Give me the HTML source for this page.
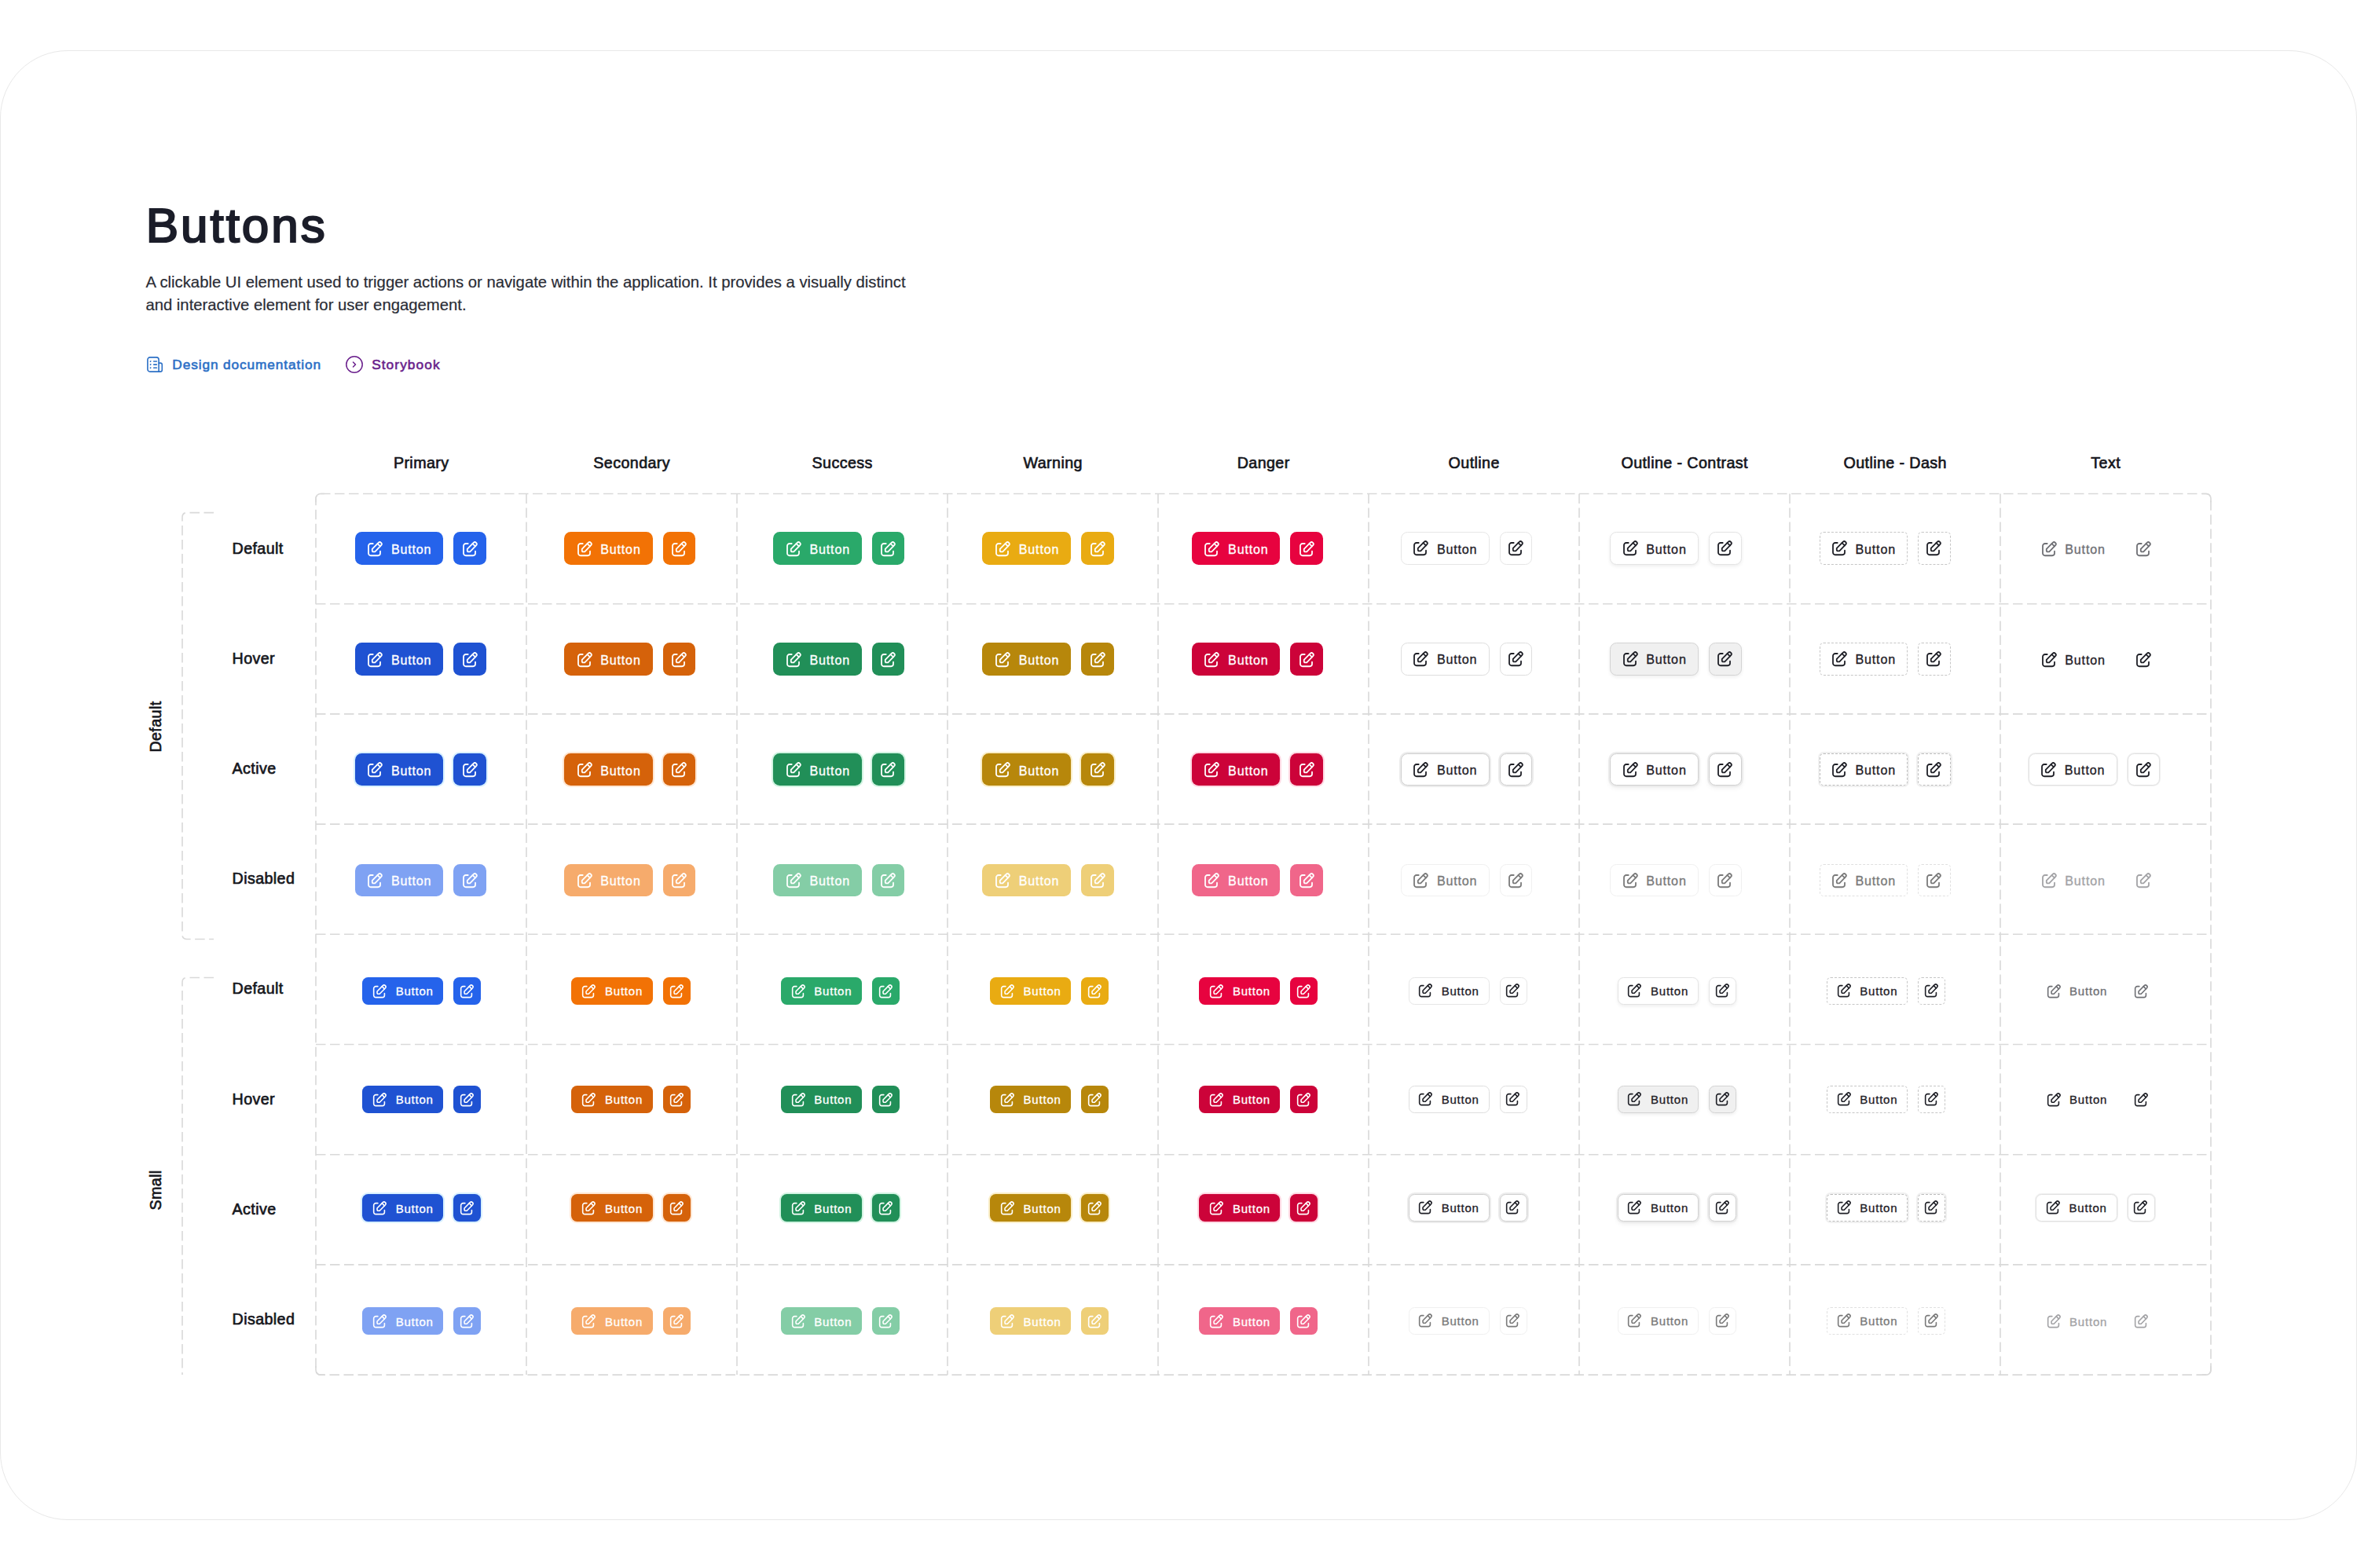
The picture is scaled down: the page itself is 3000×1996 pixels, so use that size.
<!DOCTYPE html><html><head><meta charset="utf-8"><title>Buttons</title><style>
*{box-sizing:border-box;margin:0;padding:0}
html,body{width:3000px;height:1996px;overflow:hidden;background:#ffffff;font-family:'Liberation Sans', sans-serif}
.a{position:absolute}
.t{position:absolute;white-space:nowrap;line-height:1}
.sb{font-weight:400;-webkit-text-stroke:0.6px currentColor}
.sh{font-weight:400;-webkit-text-stroke:0.65px currentColor}
.btn{position:absolute}
.btn svg{position:absolute;overflow:visible}
.btn span{position:absolute;white-space:nowrap;line-height:1;font-weight:400;-webkit-text-stroke:0.32px currentColor}
</style></head><body>
<div class="a" style="left:0;top:63.5px;width:3000px;height:1871px;border:1.5px solid #e8e8e8;border-radius:86px"></div>
<div class="t " style="left:185.74px;top:256.22px;font-size:62px;font-weight:400;color:#1b1d29;letter-spacing:2.95px;-webkit-text-stroke:2.2px #1b1d29">Buttons</div>
<div class="t " style="left:185.4px;top:348.82px;font-size:20.3px;font-weight:400;color:#2a2c35;-webkit-text-stroke:0.2px currentColor">A clickable UI element used to trigger actions or navigate within the application. It provides a visually distinct</div>
<div class="t " style="left:185.4px;top:378.32px;font-size:20.3px;font-weight:400;color:#2a2c35;-webkit-text-stroke:0.2px currentColor">and interactive element for user engagement.</div>
<svg class="a" style="left:185px;top:452px" width="24" height="24" viewBox="0 0 24 24" fill="none" stroke="#2c70c6" stroke-width="1.6" stroke-linecap="round" stroke-linejoin="round">
<path d="M17.1 21.1H5.9A3 3 0 0 1 2.9 18.1V5.9A3 3 0 0 1 5.9 2.9H14.1A3 3 0 0 1 17.1 5.9V21.1"/>
<path d="M17.1 10.1H19.1A2.2 2.2 0 0 1 21.3 12.3V18.9A2.2 2.2 0 0 1 19.1 21.1H17.1"/>
<path d="M6.4 8.2L6.8 7.8M6.4 12.3L6.8 11.9M6.4 16.4L6.8 16M10.7 8H14.4M10.7 12.1H14.4M10.7 16.2H14.4"/></svg>
<div class="t sb" style="left:219.32px;top:455.76px;font-size:17.3px;color:#2c70c6;letter-spacing:0.88px">Design documentation</div>
<svg class="a" style="left:439px;top:452px" width="24" height="24" viewBox="0 0 24 24" fill="none" stroke="#6a1f8c" stroke-width="1.5" stroke-linecap="round" stroke-linejoin="round">
<circle cx="12" cy="12" r="10.2"/><path d="M10.5 9l3 3-3 3"/></svg>
<div class="t sb" style="left:473.13px;top:455.76px;font-size:17.3px;color:#6a1f8c;letter-spacing:1.08px">Storybook</div>
<svg class="a" style="left:0;top:0" width="3000" height="1996" viewBox="0 0 3000 1996">
<rect x="402" y="628.5" width="2412" height="1121.6" rx="6" fill="none" stroke="#d9d9d9" stroke-width="1.6" stroke-dasharray="12.5 5.5"/>
<path d="M402 639.5 V634.5 A6 6 0 0 1 408 628.5 H413" fill="none" stroke="#d9d9d9" stroke-width="1.6"/>
<path d="M2814 639.5 V634.5 A6 6 0 0 0 2808 628.5 H2803" fill="none" stroke="#d9d9d9" stroke-width="1.6"/>
<path d="M402 1739.1 V1744.1 A6 6 0 0 0 408 1750.1 H413" fill="none" stroke="#d9d9d9" stroke-width="1.6"/>
<path d="M2814 1739.1 V1744.1 A6 6 0 0 1 2808 1750.1 H2803" fill="none" stroke="#d9d9d9" stroke-width="1.6"/>
<line x1="670" y1="628.5" x2="670" y2="1750.1" stroke="#d9d9d9" stroke-width="1.6" stroke-dasharray="12.5 5.5"/>
<line x1="938" y1="628.5" x2="938" y2="1750.1" stroke="#d9d9d9" stroke-width="1.6" stroke-dasharray="12.5 5.5"/>
<line x1="1206" y1="628.5" x2="1206" y2="1750.1" stroke="#d9d9d9" stroke-width="1.6" stroke-dasharray="12.5 5.5"/>
<line x1="1474" y1="628.5" x2="1474" y2="1750.1" stroke="#d9d9d9" stroke-width="1.6" stroke-dasharray="12.5 5.5"/>
<line x1="1742" y1="628.5" x2="1742" y2="1750.1" stroke="#d9d9d9" stroke-width="1.6" stroke-dasharray="12.5 5.5"/>
<line x1="2010" y1="628.5" x2="2010" y2="1750.1" stroke="#d9d9d9" stroke-width="1.6" stroke-dasharray="12.5 5.5"/>
<line x1="2278" y1="628.5" x2="2278" y2="1750.1" stroke="#d9d9d9" stroke-width="1.6" stroke-dasharray="12.5 5.5"/>
<line x1="2546" y1="628.5" x2="2546" y2="1750.1" stroke="#d9d9d9" stroke-width="1.6" stroke-dasharray="12.5 5.5"/>
<line x1="402" y1="768.7" x2="2814" y2="768.7" stroke="#d9d9d9" stroke-width="1.6" stroke-dasharray="12.5 5.5"/>
<line x1="402" y1="908.9" x2="2814" y2="908.9" stroke="#d9d9d9" stroke-width="1.6" stroke-dasharray="12.5 5.5"/>
<line x1="402" y1="1049.1" x2="2814" y2="1049.1" stroke="#d9d9d9" stroke-width="1.6" stroke-dasharray="12.5 5.5"/>
<line x1="402" y1="1189.3" x2="2814" y2="1189.3" stroke="#d9d9d9" stroke-width="1.6" stroke-dasharray="12.5 5.5"/>
<line x1="402" y1="1329.5" x2="2814" y2="1329.5" stroke="#d9d9d9" stroke-width="1.6" stroke-dasharray="12.5 5.5"/>
<line x1="402" y1="1469.7" x2="2814" y2="1469.7" stroke="#d9d9d9" stroke-width="1.6" stroke-dasharray="12.5 5.5"/>
<line x1="402" y1="1609.9" x2="2814" y2="1609.9" stroke="#d9d9d9" stroke-width="1.6" stroke-dasharray="12.5 5.5"/>
<path d="M272 652.6 H238 Q232 652.6 232 658.6 V1189.5 Q232 1195.5 238 1195.5 H272" fill="none" stroke="#d9d9d9" stroke-width="1.6" stroke-dasharray="12.5 5.5"/>
<clipPath id="cb"><rect x="200" y="1200" width="100" height="550"/></clipPath>
<g clip-path="url(#cb)"><path d="M272 1244.5 H238 Q232 1244.5 232 1250.5 V1780.5 Q232 1786.5 238 1786.5 H272" fill="none" stroke="#d9d9d9" stroke-width="1.6" stroke-dasharray="12.5 5.5"/></g>
</svg>
<div class="t sh" style="left:386.2px;width:300px;text-align:center;top:579.92px;font-size:19.7px;letter-spacing:0.4px;color:#15161c">Primary</div>
<div class="t sh" style="left:654.2px;width:300px;text-align:center;top:579.92px;font-size:19.7px;letter-spacing:0.4px;color:#15161c">Secondary</div>
<div class="t sh" style="left:922.2px;width:300px;text-align:center;top:579.92px;font-size:19.7px;letter-spacing:0.4px;color:#15161c">Success</div>
<div class="t sh" style="left:1190.2px;width:300px;text-align:center;top:579.92px;font-size:19.7px;letter-spacing:0.4px;color:#15161c">Warning</div>
<div class="t sh" style="left:1458.2px;width:300px;text-align:center;top:579.92px;font-size:19.7px;letter-spacing:0.4px;color:#15161c">Danger</div>
<div class="t sh" style="left:1726.2px;width:300px;text-align:center;top:579.92px;font-size:19.7px;letter-spacing:0.4px;color:#15161c">Outline</div>
<div class="t sh" style="left:1994.2px;width:300px;text-align:center;top:579.92px;font-size:19.7px;letter-spacing:0.4px;color:#15161c">Outline - Contrast</div>
<div class="t sh" style="left:2262.2px;width:300px;text-align:center;top:579.92px;font-size:19.7px;letter-spacing:0.4px;color:#15161c">Outline - Dash</div>
<div class="t sh" style="left:2530.2px;width:300px;text-align:center;top:579.92px;font-size:19.7px;letter-spacing:0.4px;color:#15161c">Text</div>
<div class="t sh" style="left:295.52px;top:688.52px;font-size:19.7px;color:#15161c;letter-spacing:0.4px">Default</div>
<div class="t sh" style="left:295.52px;top:828.72px;font-size:19.7px;color:#15161c;letter-spacing:0.4px">Hover</div>
<div class="t sh" style="left:295.52px;top:968.92px;font-size:19.7px;color:#15161c;letter-spacing:0.4px">Active</div>
<div class="t sh" style="left:295.52px;top:1109.12px;font-size:19.7px;color:#15161c;letter-spacing:0.4px">Disabled</div>
<div class="t sh" style="left:295.52px;top:1249.32px;font-size:19.7px;color:#15161c;letter-spacing:0.4px">Default</div>
<div class="t sh" style="left:295.52px;top:1389.52px;font-size:19.7px;color:#15161c;letter-spacing:0.4px">Hover</div>
<div class="t sh" style="left:295.52px;top:1529.72px;font-size:19.7px;color:#15161c;letter-spacing:0.4px">Active</div>
<div class="t sh" style="left:295.52px;top:1669.92px;font-size:19.7px;color:#15161c;letter-spacing:0.4px">Disabled</div>
<div class="t sh" style="left:199px;top:924.5px;font-size:19.7px;letter-spacing:0.4px;color:#15161c;transform:translate(-50%,-50%) rotate(-90deg);transform-origin:50% 50%">Default</div>
<div class="t sh" style="left:199px;top:1515px;font-size:19.7px;letter-spacing:0.4px;color:#15161c;transform:translate(-50%,-50%) rotate(-90deg);transform-origin:50% 50%">Small</div>
<div class="btn" style="left:451.5px;top:677.4px;width:112.8px;height:41.8px;border-radius:8.5px;background:#2563eb;"><svg style="left:13.8px;top:10.53px" width="24" height="24" viewBox="0 0 24 24" fill="none" stroke="#ffffff" stroke-width="1.8" stroke-linecap="round" stroke-linejoin="round"><path d="M9.7 4H6.9A2.9 2.9 0 0 0 4 6.9V16.35A2.9 2.9 0 0 0 6.9 19.25H16.1A2.9 2.9 0 0 0 19 16.35V13.7"/><path d="M8.77 13.1V10.94L16.66 2.81A2.45 2.45 0 0 1 20.16 6.23L12.23 14.4H10.07A1.3 1.3 0 0 1 8.77 13.1Z"/><path d="M15.47 4.03L18.97 7.45"/></svg><span style="left:46.41px;top:13.87px;font-size:16.1px;letter-spacing:0.82px;color:#ffffff">Button</span></div>
<div class="btn" style="left:577.2px;top:677.4px;width:41.6px;height:41.6px;border-radius:8.5px;background:#2563eb;"><svg style="left:8.6px;top:10.53px" width="24" height="24" viewBox="0 0 24 24" fill="none" stroke="#ffffff" stroke-width="1.8" stroke-linecap="round" stroke-linejoin="round"><path d="M9.7 4H6.9A2.9 2.9 0 0 0 4 6.9V16.35A2.9 2.9 0 0 0 6.9 19.25H16.1A2.9 2.9 0 0 0 19 16.35V13.7"/><path d="M8.77 13.1V10.94L16.66 2.81A2.45 2.45 0 0 1 20.16 6.23L12.23 14.4H10.07A1.3 1.3 0 0 1 8.77 13.1Z"/><path d="M15.47 4.03L18.97 7.45"/></svg></div>
<div class="btn" style="left:717.8px;top:677.4px;width:112.8px;height:41.8px;border-radius:8.5px;background:#f27205;"><svg style="left:13.8px;top:10.53px" width="24" height="24" viewBox="0 0 24 24" fill="none" stroke="#ffffff" stroke-width="1.8" stroke-linecap="round" stroke-linejoin="round"><path d="M9.7 4H6.9A2.9 2.9 0 0 0 4 6.9V16.35A2.9 2.9 0 0 0 6.9 19.25H16.1A2.9 2.9 0 0 0 19 16.35V13.7"/><path d="M8.77 13.1V10.94L16.66 2.81A2.45 2.45 0 0 1 20.16 6.23L12.23 14.4H10.07A1.3 1.3 0 0 1 8.77 13.1Z"/><path d="M15.47 4.03L18.97 7.45"/></svg><span style="left:46.41px;top:13.87px;font-size:16.1px;letter-spacing:0.82px;color:#ffffff">Button</span></div>
<div class="btn" style="left:843.5px;top:677.4px;width:41.6px;height:41.6px;border-radius:8.5px;background:#f27205;"><svg style="left:8.6px;top:10.53px" width="24" height="24" viewBox="0 0 24 24" fill="none" stroke="#ffffff" stroke-width="1.8" stroke-linecap="round" stroke-linejoin="round"><path d="M9.7 4H6.9A2.9 2.9 0 0 0 4 6.9V16.35A2.9 2.9 0 0 0 6.9 19.25H16.1A2.9 2.9 0 0 0 19 16.35V13.7"/><path d="M8.77 13.1V10.94L16.66 2.81A2.45 2.45 0 0 1 20.16 6.23L12.23 14.4H10.07A1.3 1.3 0 0 1 8.77 13.1Z"/><path d="M15.47 4.03L18.97 7.45"/></svg></div>
<div class="btn" style="left:984.1px;top:677.4px;width:112.8px;height:41.8px;border-radius:8.5px;background:#2aa96a;"><svg style="left:13.8px;top:10.53px" width="24" height="24" viewBox="0 0 24 24" fill="none" stroke="#ffffff" stroke-width="1.8" stroke-linecap="round" stroke-linejoin="round"><path d="M9.7 4H6.9A2.9 2.9 0 0 0 4 6.9V16.35A2.9 2.9 0 0 0 6.9 19.25H16.1A2.9 2.9 0 0 0 19 16.35V13.7"/><path d="M8.77 13.1V10.94L16.66 2.81A2.45 2.45 0 0 1 20.16 6.23L12.23 14.4H10.07A1.3 1.3 0 0 1 8.77 13.1Z"/><path d="M15.47 4.03L18.97 7.45"/></svg><span style="left:46.41px;top:13.87px;font-size:16.1px;letter-spacing:0.82px;color:#ffffff">Button</span></div>
<div class="btn" style="left:1109.8px;top:677.4px;width:41.6px;height:41.6px;border-radius:8.5px;background:#2aa96a;"><svg style="left:8.6px;top:10.53px" width="24" height="24" viewBox="0 0 24 24" fill="none" stroke="#ffffff" stroke-width="1.8" stroke-linecap="round" stroke-linejoin="round"><path d="M9.7 4H6.9A2.9 2.9 0 0 0 4 6.9V16.35A2.9 2.9 0 0 0 6.9 19.25H16.1A2.9 2.9 0 0 0 19 16.35V13.7"/><path d="M8.77 13.1V10.94L16.66 2.81A2.45 2.45 0 0 1 20.16 6.23L12.23 14.4H10.07A1.3 1.3 0 0 1 8.77 13.1Z"/><path d="M15.47 4.03L18.97 7.45"/></svg></div>
<div class="btn" style="left:1250.4px;top:677.4px;width:112.8px;height:41.8px;border-radius:8.5px;background:#e9ab12;"><svg style="left:13.8px;top:10.53px" width="24" height="24" viewBox="0 0 24 24" fill="none" stroke="#ffffff" stroke-width="1.8" stroke-linecap="round" stroke-linejoin="round"><path d="M9.7 4H6.9A2.9 2.9 0 0 0 4 6.9V16.35A2.9 2.9 0 0 0 6.9 19.25H16.1A2.9 2.9 0 0 0 19 16.35V13.7"/><path d="M8.77 13.1V10.94L16.66 2.81A2.45 2.45 0 0 1 20.16 6.23L12.23 14.4H10.07A1.3 1.3 0 0 1 8.77 13.1Z"/><path d="M15.47 4.03L18.97 7.45"/></svg><span style="left:46.41px;top:13.87px;font-size:16.1px;letter-spacing:0.82px;color:#ffffff">Button</span></div>
<div class="btn" style="left:1376.1px;top:677.4px;width:41.6px;height:41.6px;border-radius:8.5px;background:#e9ab12;"><svg style="left:8.6px;top:10.53px" width="24" height="24" viewBox="0 0 24 24" fill="none" stroke="#ffffff" stroke-width="1.8" stroke-linecap="round" stroke-linejoin="round"><path d="M9.7 4H6.9A2.9 2.9 0 0 0 4 6.9V16.35A2.9 2.9 0 0 0 6.9 19.25H16.1A2.9 2.9 0 0 0 19 16.35V13.7"/><path d="M8.77 13.1V10.94L16.66 2.81A2.45 2.45 0 0 1 20.16 6.23L12.23 14.4H10.07A1.3 1.3 0 0 1 8.77 13.1Z"/><path d="M15.47 4.03L18.97 7.45"/></svg></div>
<div class="btn" style="left:1516.7px;top:677.4px;width:112.8px;height:41.8px;border-radius:8.5px;background:#e7033f;"><svg style="left:13.8px;top:10.53px" width="24" height="24" viewBox="0 0 24 24" fill="none" stroke="#ffffff" stroke-width="1.8" stroke-linecap="round" stroke-linejoin="round"><path d="M9.7 4H6.9A2.9 2.9 0 0 0 4 6.9V16.35A2.9 2.9 0 0 0 6.9 19.25H16.1A2.9 2.9 0 0 0 19 16.35V13.7"/><path d="M8.77 13.1V10.94L16.66 2.81A2.45 2.45 0 0 1 20.16 6.23L12.23 14.4H10.07A1.3 1.3 0 0 1 8.77 13.1Z"/><path d="M15.47 4.03L18.97 7.45"/></svg><span style="left:46.41px;top:13.87px;font-size:16.1px;letter-spacing:0.82px;color:#ffffff">Button</span></div>
<div class="btn" style="left:1642.4px;top:677.4px;width:41.6px;height:41.6px;border-radius:8.5px;background:#e7033f;"><svg style="left:8.6px;top:10.53px" width="24" height="24" viewBox="0 0 24 24" fill="none" stroke="#ffffff" stroke-width="1.8" stroke-linecap="round" stroke-linejoin="round"><path d="M9.7 4H6.9A2.9 2.9 0 0 0 4 6.9V16.35A2.9 2.9 0 0 0 6.9 19.25H16.1A2.9 2.9 0 0 0 19 16.35V13.7"/><path d="M8.77 13.1V10.94L16.66 2.81A2.45 2.45 0 0 1 20.16 6.23L12.23 14.4H10.07A1.3 1.3 0 0 1 8.77 13.1Z"/><path d="M15.47 4.03L18.97 7.45"/></svg></div>
<div class="btn" style="left:1783px;top:677.4px;width:112.8px;height:41.8px;border-radius:8.5px;background:#fff;border:1.5px solid #e6e6e6;"><svg style="left:12.3px;top:9.03px" width="24" height="24" viewBox="0 0 24 24" fill="none" stroke="#1f2027" stroke-width="1.8" stroke-linecap="round" stroke-linejoin="round"><path d="M9.7 4H6.9A2.9 2.9 0 0 0 4 6.9V16.35A2.9 2.9 0 0 0 6.9 19.25H16.1A2.9 2.9 0 0 0 19 16.35V13.7"/><path d="M8.77 13.1V10.94L16.66 2.81A2.45 2.45 0 0 1 20.16 6.23L12.23 14.4H10.07A1.3 1.3 0 0 1 8.77 13.1Z"/><path d="M15.47 4.03L18.97 7.45"/></svg><span style="left:44.91px;top:12.37px;font-size:16.1px;letter-spacing:0.82px;color:#1f2027">Button</span></div>
<div class="btn" style="left:1908.7px;top:677.4px;width:41.6px;height:41.6px;border-radius:8.5px;background:#fff;border:1.5px solid #e6e6e6;"><svg style="left:7.1px;top:9.03px" width="24" height="24" viewBox="0 0 24 24" fill="none" stroke="#1f2027" stroke-width="1.8" stroke-linecap="round" stroke-linejoin="round"><path d="M9.7 4H6.9A2.9 2.9 0 0 0 4 6.9V16.35A2.9 2.9 0 0 0 6.9 19.25H16.1A2.9 2.9 0 0 0 19 16.35V13.7"/><path d="M8.77 13.1V10.94L16.66 2.81A2.45 2.45 0 0 1 20.16 6.23L12.23 14.4H10.07A1.3 1.3 0 0 1 8.77 13.1Z"/><path d="M15.47 4.03L18.97 7.45"/></svg></div>
<div class="btn" style="left:2049.3px;top:677.4px;width:112.8px;height:41.8px;border-radius:8.5px;background:#fff;border:1.5px solid #e4e4e4;box-shadow:0 2px 4px rgba(0,0,0,0.07);"><svg style="left:12.3px;top:9.03px" width="24" height="24" viewBox="0 0 24 24" fill="none" stroke="#1f2027" stroke-width="1.8" stroke-linecap="round" stroke-linejoin="round"><path d="M9.7 4H6.9A2.9 2.9 0 0 0 4 6.9V16.35A2.9 2.9 0 0 0 6.9 19.25H16.1A2.9 2.9 0 0 0 19 16.35V13.7"/><path d="M8.77 13.1V10.94L16.66 2.81A2.45 2.45 0 0 1 20.16 6.23L12.23 14.4H10.07A1.3 1.3 0 0 1 8.77 13.1Z"/><path d="M15.47 4.03L18.97 7.45"/></svg><span style="left:44.91px;top:12.37px;font-size:16.1px;letter-spacing:0.82px;color:#1f2027">Button</span></div>
<div class="btn" style="left:2175px;top:677.4px;width:41.6px;height:41.6px;border-radius:8.5px;background:#fff;border:1.5px solid #e4e4e4;box-shadow:0 2px 4px rgba(0,0,0,0.07);"><svg style="left:7.1px;top:9.03px" width="24" height="24" viewBox="0 0 24 24" fill="none" stroke="#1f2027" stroke-width="1.8" stroke-linecap="round" stroke-linejoin="round"><path d="M9.7 4H6.9A2.9 2.9 0 0 0 4 6.9V16.35A2.9 2.9 0 0 0 6.9 19.25H16.1A2.9 2.9 0 0 0 19 16.35V13.7"/><path d="M8.77 13.1V10.94L16.66 2.81A2.45 2.45 0 0 1 20.16 6.23L12.23 14.4H10.07A1.3 1.3 0 0 1 8.77 13.1Z"/><path d="M15.47 4.03L18.97 7.45"/></svg></div>
<div class="btn" style="left:2315.6px;top:677.4px;width:112.8px;height:41.8px;border-radius:8.5px;background:#fff;border:1.5px dashed #c6c6c6;border-radius:5px;"><svg style="left:12.3px;top:9.03px" width="24" height="24" viewBox="0 0 24 24" fill="none" stroke="#1f2027" stroke-width="1.8" stroke-linecap="round" stroke-linejoin="round"><path d="M9.7 4H6.9A2.9 2.9 0 0 0 4 6.9V16.35A2.9 2.9 0 0 0 6.9 19.25H16.1A2.9 2.9 0 0 0 19 16.35V13.7"/><path d="M8.77 13.1V10.94L16.66 2.81A2.45 2.45 0 0 1 20.16 6.23L12.23 14.4H10.07A1.3 1.3 0 0 1 8.77 13.1Z"/><path d="M15.47 4.03L18.97 7.45"/></svg><span style="left:44.91px;top:12.37px;font-size:16.1px;letter-spacing:0.82px;color:#1f2027">Button</span></div>
<div class="btn" style="left:2441.3px;top:677.4px;width:41.6px;height:41.6px;border-radius:8.5px;background:#fff;border:1.5px dashed #c6c6c6;border-radius:5px;"><svg style="left:7.1px;top:9.03px" width="24" height="24" viewBox="0 0 24 24" fill="none" stroke="#1f2027" stroke-width="1.8" stroke-linecap="round" stroke-linejoin="round"><path d="M9.7 4H6.9A2.9 2.9 0 0 0 4 6.9V16.35A2.9 2.9 0 0 0 6.9 19.25H16.1A2.9 2.9 0 0 0 19 16.35V13.7"/><path d="M8.77 13.1V10.94L16.66 2.81A2.45 2.45 0 0 1 20.16 6.23L12.23 14.4H10.07A1.3 1.3 0 0 1 8.77 13.1Z"/><path d="M15.47 4.03L18.97 7.45"/></svg></div>
<div class="btn" style="left:2581.9px;top:677.4px;width:112.8px;height:41.8px;border-radius:8.5px;background:transparent;"><svg style="left:13.8px;top:10.53px" width="24" height="24" viewBox="0 0 24 24" fill="none" stroke="#6f7075" stroke-width="1.8" stroke-linecap="round" stroke-linejoin="round"><path d="M9.7 4H6.9A2.9 2.9 0 0 0 4 6.9V16.35A2.9 2.9 0 0 0 6.9 19.25H16.1A2.9 2.9 0 0 0 19 16.35V13.7"/><path d="M8.77 13.1V10.94L16.66 2.81A2.45 2.45 0 0 1 20.16 6.23L12.23 14.4H10.07A1.3 1.3 0 0 1 8.77 13.1Z"/><path d="M15.47 4.03L18.97 7.45"/></svg><span style="left:46.41px;top:13.87px;font-size:16.1px;letter-spacing:0.82px;color:#6f7075">Button</span></div>
<div class="btn" style="left:2707.6px;top:677.4px;width:41.6px;height:41.6px;border-radius:8.5px;background:transparent;"><svg style="left:8.6px;top:10.53px" width="24" height="24" viewBox="0 0 24 24" fill="none" stroke="#6f7075" stroke-width="1.8" stroke-linecap="round" stroke-linejoin="round"><path d="M9.7 4H6.9A2.9 2.9 0 0 0 4 6.9V16.35A2.9 2.9 0 0 0 6.9 19.25H16.1A2.9 2.9 0 0 0 19 16.35V13.7"/><path d="M8.77 13.1V10.94L16.66 2.81A2.45 2.45 0 0 1 20.16 6.23L12.23 14.4H10.07A1.3 1.3 0 0 1 8.77 13.1Z"/><path d="M15.47 4.03L18.97 7.45"/></svg></div>
<div class="btn" style="left:451.5px;top:818px;width:112.8px;height:41.8px;border-radius:8.5px;background:#1f52d2;"><svg style="left:13.8px;top:10.53px" width="24" height="24" viewBox="0 0 24 24" fill="none" stroke="#ffffff" stroke-width="1.8" stroke-linecap="round" stroke-linejoin="round"><path d="M9.7 4H6.9A2.9 2.9 0 0 0 4 6.9V16.35A2.9 2.9 0 0 0 6.9 19.25H16.1A2.9 2.9 0 0 0 19 16.35V13.7"/><path d="M8.77 13.1V10.94L16.66 2.81A2.45 2.45 0 0 1 20.16 6.23L12.23 14.4H10.07A1.3 1.3 0 0 1 8.77 13.1Z"/><path d="M15.47 4.03L18.97 7.45"/></svg><span style="left:46.41px;top:13.87px;font-size:16.1px;letter-spacing:0.82px;color:#ffffff">Button</span></div>
<div class="btn" style="left:577.2px;top:818px;width:41.6px;height:41.6px;border-radius:8.5px;background:#1f52d2;"><svg style="left:8.6px;top:10.53px" width="24" height="24" viewBox="0 0 24 24" fill="none" stroke="#ffffff" stroke-width="1.8" stroke-linecap="round" stroke-linejoin="round"><path d="M9.7 4H6.9A2.9 2.9 0 0 0 4 6.9V16.35A2.9 2.9 0 0 0 6.9 19.25H16.1A2.9 2.9 0 0 0 19 16.35V13.7"/><path d="M8.77 13.1V10.94L16.66 2.81A2.45 2.45 0 0 1 20.16 6.23L12.23 14.4H10.07A1.3 1.3 0 0 1 8.77 13.1Z"/><path d="M15.47 4.03L18.97 7.45"/></svg></div>
<div class="btn" style="left:717.8px;top:818px;width:112.8px;height:41.8px;border-radius:8.5px;background:#d5620a;"><svg style="left:13.8px;top:10.53px" width="24" height="24" viewBox="0 0 24 24" fill="none" stroke="#ffffff" stroke-width="1.8" stroke-linecap="round" stroke-linejoin="round"><path d="M9.7 4H6.9A2.9 2.9 0 0 0 4 6.9V16.35A2.9 2.9 0 0 0 6.9 19.25H16.1A2.9 2.9 0 0 0 19 16.35V13.7"/><path d="M8.77 13.1V10.94L16.66 2.81A2.45 2.45 0 0 1 20.16 6.23L12.23 14.4H10.07A1.3 1.3 0 0 1 8.77 13.1Z"/><path d="M15.47 4.03L18.97 7.45"/></svg><span style="left:46.41px;top:13.87px;font-size:16.1px;letter-spacing:0.82px;color:#ffffff">Button</span></div>
<div class="btn" style="left:843.5px;top:818px;width:41.6px;height:41.6px;border-radius:8.5px;background:#d5620a;"><svg style="left:8.6px;top:10.53px" width="24" height="24" viewBox="0 0 24 24" fill="none" stroke="#ffffff" stroke-width="1.8" stroke-linecap="round" stroke-linejoin="round"><path d="M9.7 4H6.9A2.9 2.9 0 0 0 4 6.9V16.35A2.9 2.9 0 0 0 6.9 19.25H16.1A2.9 2.9 0 0 0 19 16.35V13.7"/><path d="M8.77 13.1V10.94L16.66 2.81A2.45 2.45 0 0 1 20.16 6.23L12.23 14.4H10.07A1.3 1.3 0 0 1 8.77 13.1Z"/><path d="M15.47 4.03L18.97 7.45"/></svg></div>
<div class="btn" style="left:984.1px;top:818px;width:112.8px;height:41.8px;border-radius:8.5px;background:#218f58;"><svg style="left:13.8px;top:10.53px" width="24" height="24" viewBox="0 0 24 24" fill="none" stroke="#ffffff" stroke-width="1.8" stroke-linecap="round" stroke-linejoin="round"><path d="M9.7 4H6.9A2.9 2.9 0 0 0 4 6.9V16.35A2.9 2.9 0 0 0 6.9 19.25H16.1A2.9 2.9 0 0 0 19 16.35V13.7"/><path d="M8.77 13.1V10.94L16.66 2.81A2.45 2.45 0 0 1 20.16 6.23L12.23 14.4H10.07A1.3 1.3 0 0 1 8.77 13.1Z"/><path d="M15.47 4.03L18.97 7.45"/></svg><span style="left:46.41px;top:13.87px;font-size:16.1px;letter-spacing:0.82px;color:#ffffff">Button</span></div>
<div class="btn" style="left:1109.8px;top:818px;width:41.6px;height:41.6px;border-radius:8.5px;background:#218f58;"><svg style="left:8.6px;top:10.53px" width="24" height="24" viewBox="0 0 24 24" fill="none" stroke="#ffffff" stroke-width="1.8" stroke-linecap="round" stroke-linejoin="round"><path d="M9.7 4H6.9A2.9 2.9 0 0 0 4 6.9V16.35A2.9 2.9 0 0 0 6.9 19.25H16.1A2.9 2.9 0 0 0 19 16.35V13.7"/><path d="M8.77 13.1V10.94L16.66 2.81A2.45 2.45 0 0 1 20.16 6.23L12.23 14.4H10.07A1.3 1.3 0 0 1 8.77 13.1Z"/><path d="M15.47 4.03L18.97 7.45"/></svg></div>
<div class="btn" style="left:1250.4px;top:818px;width:112.8px;height:41.8px;border-radius:8.5px;background:#b7870b;"><svg style="left:13.8px;top:10.53px" width="24" height="24" viewBox="0 0 24 24" fill="none" stroke="#ffffff" stroke-width="1.8" stroke-linecap="round" stroke-linejoin="round"><path d="M9.7 4H6.9A2.9 2.9 0 0 0 4 6.9V16.35A2.9 2.9 0 0 0 6.9 19.25H16.1A2.9 2.9 0 0 0 19 16.35V13.7"/><path d="M8.77 13.1V10.94L16.66 2.81A2.45 2.45 0 0 1 20.16 6.23L12.23 14.4H10.07A1.3 1.3 0 0 1 8.77 13.1Z"/><path d="M15.47 4.03L18.97 7.45"/></svg><span style="left:46.41px;top:13.87px;font-size:16.1px;letter-spacing:0.82px;color:#ffffff">Button</span></div>
<div class="btn" style="left:1376.1px;top:818px;width:41.6px;height:41.6px;border-radius:8.5px;background:#b7870b;"><svg style="left:8.6px;top:10.53px" width="24" height="24" viewBox="0 0 24 24" fill="none" stroke="#ffffff" stroke-width="1.8" stroke-linecap="round" stroke-linejoin="round"><path d="M9.7 4H6.9A2.9 2.9 0 0 0 4 6.9V16.35A2.9 2.9 0 0 0 6.9 19.25H16.1A2.9 2.9 0 0 0 19 16.35V13.7"/><path d="M8.77 13.1V10.94L16.66 2.81A2.45 2.45 0 0 1 20.16 6.23L12.23 14.4H10.07A1.3 1.3 0 0 1 8.77 13.1Z"/><path d="M15.47 4.03L18.97 7.45"/></svg></div>
<div class="btn" style="left:1516.7px;top:818px;width:112.8px;height:41.8px;border-radius:8.5px;background:#cc0339;"><svg style="left:13.8px;top:10.53px" width="24" height="24" viewBox="0 0 24 24" fill="none" stroke="#ffffff" stroke-width="1.8" stroke-linecap="round" stroke-linejoin="round"><path d="M9.7 4H6.9A2.9 2.9 0 0 0 4 6.9V16.35A2.9 2.9 0 0 0 6.9 19.25H16.1A2.9 2.9 0 0 0 19 16.35V13.7"/><path d="M8.77 13.1V10.94L16.66 2.81A2.45 2.45 0 0 1 20.16 6.23L12.23 14.4H10.07A1.3 1.3 0 0 1 8.77 13.1Z"/><path d="M15.47 4.03L18.97 7.45"/></svg><span style="left:46.41px;top:13.87px;font-size:16.1px;letter-spacing:0.82px;color:#ffffff">Button</span></div>
<div class="btn" style="left:1642.4px;top:818px;width:41.6px;height:41.6px;border-radius:8.5px;background:#cc0339;"><svg style="left:8.6px;top:10.53px" width="24" height="24" viewBox="0 0 24 24" fill="none" stroke="#ffffff" stroke-width="1.8" stroke-linecap="round" stroke-linejoin="round"><path d="M9.7 4H6.9A2.9 2.9 0 0 0 4 6.9V16.35A2.9 2.9 0 0 0 6.9 19.25H16.1A2.9 2.9 0 0 0 19 16.35V13.7"/><path d="M8.77 13.1V10.94L16.66 2.81A2.45 2.45 0 0 1 20.16 6.23L12.23 14.4H10.07A1.3 1.3 0 0 1 8.77 13.1Z"/><path d="M15.47 4.03L18.97 7.45"/></svg></div>
<div class="btn" style="left:1783px;top:818px;width:112.8px;height:41.8px;border-radius:8.5px;background:#fff;border:1.5px solid #dedede;"><svg style="left:12.3px;top:9.03px" width="24" height="24" viewBox="0 0 24 24" fill="none" stroke="#1f2027" stroke-width="1.8" stroke-linecap="round" stroke-linejoin="round"><path d="M9.7 4H6.9A2.9 2.9 0 0 0 4 6.9V16.35A2.9 2.9 0 0 0 6.9 19.25H16.1A2.9 2.9 0 0 0 19 16.35V13.7"/><path d="M8.77 13.1V10.94L16.66 2.81A2.45 2.45 0 0 1 20.16 6.23L12.23 14.4H10.07A1.3 1.3 0 0 1 8.77 13.1Z"/><path d="M15.47 4.03L18.97 7.45"/></svg><span style="left:44.91px;top:12.37px;font-size:16.1px;letter-spacing:0.82px;color:#1f2027">Button</span></div>
<div class="btn" style="left:1908.7px;top:818px;width:41.6px;height:41.6px;border-radius:8.5px;background:#fff;border:1.5px solid #dedede;"><svg style="left:7.1px;top:9.03px" width="24" height="24" viewBox="0 0 24 24" fill="none" stroke="#1f2027" stroke-width="1.8" stroke-linecap="round" stroke-linejoin="round"><path d="M9.7 4H6.9A2.9 2.9 0 0 0 4 6.9V16.35A2.9 2.9 0 0 0 6.9 19.25H16.1A2.9 2.9 0 0 0 19 16.35V13.7"/><path d="M8.77 13.1V10.94L16.66 2.81A2.45 2.45 0 0 1 20.16 6.23L12.23 14.4H10.07A1.3 1.3 0 0 1 8.77 13.1Z"/><path d="M15.47 4.03L18.97 7.45"/></svg></div>
<div class="btn" style="left:2049.3px;top:818px;width:112.8px;height:41.8px;border-radius:8.5px;background:#f0f0f0;border:1.5px solid #d4d4d4;box-shadow:0 2px 4px rgba(0,0,0,0.07);"><svg style="left:12.3px;top:9.03px" width="24" height="24" viewBox="0 0 24 24" fill="none" stroke="#1f2027" stroke-width="1.8" stroke-linecap="round" stroke-linejoin="round"><path d="M9.7 4H6.9A2.9 2.9 0 0 0 4 6.9V16.35A2.9 2.9 0 0 0 6.9 19.25H16.1A2.9 2.9 0 0 0 19 16.35V13.7"/><path d="M8.77 13.1V10.94L16.66 2.81A2.45 2.45 0 0 1 20.16 6.23L12.23 14.4H10.07A1.3 1.3 0 0 1 8.77 13.1Z"/><path d="M15.47 4.03L18.97 7.45"/></svg><span style="left:44.91px;top:12.37px;font-size:16.1px;letter-spacing:0.82px;color:#1f2027">Button</span></div>
<div class="btn" style="left:2175px;top:818px;width:41.6px;height:41.6px;border-radius:8.5px;background:#f0f0f0;border:1.5px solid #d4d4d4;box-shadow:0 2px 4px rgba(0,0,0,0.07);"><svg style="left:7.1px;top:9.03px" width="24" height="24" viewBox="0 0 24 24" fill="none" stroke="#1f2027" stroke-width="1.8" stroke-linecap="round" stroke-linejoin="round"><path d="M9.7 4H6.9A2.9 2.9 0 0 0 4 6.9V16.35A2.9 2.9 0 0 0 6.9 19.25H16.1A2.9 2.9 0 0 0 19 16.35V13.7"/><path d="M8.77 13.1V10.94L16.66 2.81A2.45 2.45 0 0 1 20.16 6.23L12.23 14.4H10.07A1.3 1.3 0 0 1 8.77 13.1Z"/><path d="M15.47 4.03L18.97 7.45"/></svg></div>
<div class="btn" style="left:2315.6px;top:818px;width:112.8px;height:41.8px;border-radius:8.5px;background:#fff;border:1.5px dashed #c6c6c6;border-radius:5px;"><svg style="left:12.3px;top:9.03px" width="24" height="24" viewBox="0 0 24 24" fill="none" stroke="#1f2027" stroke-width="1.8" stroke-linecap="round" stroke-linejoin="round"><path d="M9.7 4H6.9A2.9 2.9 0 0 0 4 6.9V16.35A2.9 2.9 0 0 0 6.9 19.25H16.1A2.9 2.9 0 0 0 19 16.35V13.7"/><path d="M8.77 13.1V10.94L16.66 2.81A2.45 2.45 0 0 1 20.16 6.23L12.23 14.4H10.07A1.3 1.3 0 0 1 8.77 13.1Z"/><path d="M15.47 4.03L18.97 7.45"/></svg><span style="left:44.91px;top:12.37px;font-size:16.1px;letter-spacing:0.82px;color:#1f2027">Button</span></div>
<div class="btn" style="left:2441.3px;top:818px;width:41.6px;height:41.6px;border-radius:8.5px;background:#fff;border:1.5px dashed #c6c6c6;border-radius:5px;"><svg style="left:7.1px;top:9.03px" width="24" height="24" viewBox="0 0 24 24" fill="none" stroke="#1f2027" stroke-width="1.8" stroke-linecap="round" stroke-linejoin="round"><path d="M9.7 4H6.9A2.9 2.9 0 0 0 4 6.9V16.35A2.9 2.9 0 0 0 6.9 19.25H16.1A2.9 2.9 0 0 0 19 16.35V13.7"/><path d="M8.77 13.1V10.94L16.66 2.81A2.45 2.45 0 0 1 20.16 6.23L12.23 14.4H10.07A1.3 1.3 0 0 1 8.77 13.1Z"/><path d="M15.47 4.03L18.97 7.45"/></svg></div>
<div class="btn" style="left:2581.9px;top:818px;width:112.8px;height:41.8px;border-radius:8.5px;background:transparent;"><svg style="left:13.8px;top:10.53px" width="24" height="24" viewBox="0 0 24 24" fill="none" stroke="#1f2027" stroke-width="1.8" stroke-linecap="round" stroke-linejoin="round"><path d="M9.7 4H6.9A2.9 2.9 0 0 0 4 6.9V16.35A2.9 2.9 0 0 0 6.9 19.25H16.1A2.9 2.9 0 0 0 19 16.35V13.7"/><path d="M8.77 13.1V10.94L16.66 2.81A2.45 2.45 0 0 1 20.16 6.23L12.23 14.4H10.07A1.3 1.3 0 0 1 8.77 13.1Z"/><path d="M15.47 4.03L18.97 7.45"/></svg><span style="left:46.41px;top:13.87px;font-size:16.1px;letter-spacing:0.82px;color:#1f2027">Button</span></div>
<div class="btn" style="left:2707.6px;top:818px;width:41.6px;height:41.6px;border-radius:8.5px;background:transparent;"><svg style="left:8.6px;top:10.53px" width="24" height="24" viewBox="0 0 24 24" fill="none" stroke="#1f2027" stroke-width="1.8" stroke-linecap="round" stroke-linejoin="round"><path d="M9.7 4H6.9A2.9 2.9 0 0 0 4 6.9V16.35A2.9 2.9 0 0 0 6.9 19.25H16.1A2.9 2.9 0 0 0 19 16.35V13.7"/><path d="M8.77 13.1V10.94L16.66 2.81A2.45 2.45 0 0 1 20.16 6.23L12.23 14.4H10.07A1.3 1.3 0 0 1 8.77 13.1Z"/><path d="M15.47 4.03L18.97 7.45"/></svg></div>
<div class="btn" style="left:451.5px;top:958.7px;width:112.8px;height:41.8px;border-radius:8.5px;background:#1f52d2;box-shadow:0 0 0 2px #d8f0ff;"><svg style="left:13.8px;top:10.53px" width="24" height="24" viewBox="0 0 24 24" fill="none" stroke="#ffffff" stroke-width="1.8" stroke-linecap="round" stroke-linejoin="round"><path d="M9.7 4H6.9A2.9 2.9 0 0 0 4 6.9V16.35A2.9 2.9 0 0 0 6.9 19.25H16.1A2.9 2.9 0 0 0 19 16.35V13.7"/><path d="M8.77 13.1V10.94L16.66 2.81A2.45 2.45 0 0 1 20.16 6.23L12.23 14.4H10.07A1.3 1.3 0 0 1 8.77 13.1Z"/><path d="M15.47 4.03L18.97 7.45"/></svg><span style="left:46.41px;top:13.87px;font-size:16.1px;letter-spacing:0.82px;color:#ffffff">Button</span></div>
<div class="btn" style="left:577.2px;top:958.7px;width:41.6px;height:41.6px;border-radius:8.5px;background:#1f52d2;box-shadow:0 0 0 2px #d8f0ff;"><svg style="left:8.6px;top:10.53px" width="24" height="24" viewBox="0 0 24 24" fill="none" stroke="#ffffff" stroke-width="1.8" stroke-linecap="round" stroke-linejoin="round"><path d="M9.7 4H6.9A2.9 2.9 0 0 0 4 6.9V16.35A2.9 2.9 0 0 0 6.9 19.25H16.1A2.9 2.9 0 0 0 19 16.35V13.7"/><path d="M8.77 13.1V10.94L16.66 2.81A2.45 2.45 0 0 1 20.16 6.23L12.23 14.4H10.07A1.3 1.3 0 0 1 8.77 13.1Z"/><path d="M15.47 4.03L18.97 7.45"/></svg></div>
<div class="btn" style="left:717.8px;top:958.7px;width:112.8px;height:41.8px;border-radius:8.5px;background:#d5620a;box-shadow:0 0 0 2px #ffe6d2;"><svg style="left:13.8px;top:10.53px" width="24" height="24" viewBox="0 0 24 24" fill="none" stroke="#ffffff" stroke-width="1.8" stroke-linecap="round" stroke-linejoin="round"><path d="M9.7 4H6.9A2.9 2.9 0 0 0 4 6.9V16.35A2.9 2.9 0 0 0 6.9 19.25H16.1A2.9 2.9 0 0 0 19 16.35V13.7"/><path d="M8.77 13.1V10.94L16.66 2.81A2.45 2.45 0 0 1 20.16 6.23L12.23 14.4H10.07A1.3 1.3 0 0 1 8.77 13.1Z"/><path d="M15.47 4.03L18.97 7.45"/></svg><span style="left:46.41px;top:13.87px;font-size:16.1px;letter-spacing:0.82px;color:#ffffff">Button</span></div>
<div class="btn" style="left:843.5px;top:958.7px;width:41.6px;height:41.6px;border-radius:8.5px;background:#d5620a;box-shadow:0 0 0 2px #ffe6d2;"><svg style="left:8.6px;top:10.53px" width="24" height="24" viewBox="0 0 24 24" fill="none" stroke="#ffffff" stroke-width="1.8" stroke-linecap="round" stroke-linejoin="round"><path d="M9.7 4H6.9A2.9 2.9 0 0 0 4 6.9V16.35A2.9 2.9 0 0 0 6.9 19.25H16.1A2.9 2.9 0 0 0 19 16.35V13.7"/><path d="M8.77 13.1V10.94L16.66 2.81A2.45 2.45 0 0 1 20.16 6.23L12.23 14.4H10.07A1.3 1.3 0 0 1 8.77 13.1Z"/><path d="M15.47 4.03L18.97 7.45"/></svg></div>
<div class="btn" style="left:984.1px;top:958.7px;width:112.8px;height:41.8px;border-radius:8.5px;background:#218f58;box-shadow:0 0 0 2px #d2f4e2;"><svg style="left:13.8px;top:10.53px" width="24" height="24" viewBox="0 0 24 24" fill="none" stroke="#ffffff" stroke-width="1.8" stroke-linecap="round" stroke-linejoin="round"><path d="M9.7 4H6.9A2.9 2.9 0 0 0 4 6.9V16.35A2.9 2.9 0 0 0 6.9 19.25H16.1A2.9 2.9 0 0 0 19 16.35V13.7"/><path d="M8.77 13.1V10.94L16.66 2.81A2.45 2.45 0 0 1 20.16 6.23L12.23 14.4H10.07A1.3 1.3 0 0 1 8.77 13.1Z"/><path d="M15.47 4.03L18.97 7.45"/></svg><span style="left:46.41px;top:13.87px;font-size:16.1px;letter-spacing:0.82px;color:#ffffff">Button</span></div>
<div class="btn" style="left:1109.8px;top:958.7px;width:41.6px;height:41.6px;border-radius:8.5px;background:#218f58;box-shadow:0 0 0 2px #d2f4e2;"><svg style="left:8.6px;top:10.53px" width="24" height="24" viewBox="0 0 24 24" fill="none" stroke="#ffffff" stroke-width="1.8" stroke-linecap="round" stroke-linejoin="round"><path d="M9.7 4H6.9A2.9 2.9 0 0 0 4 6.9V16.35A2.9 2.9 0 0 0 6.9 19.25H16.1A2.9 2.9 0 0 0 19 16.35V13.7"/><path d="M8.77 13.1V10.94L16.66 2.81A2.45 2.45 0 0 1 20.16 6.23L12.23 14.4H10.07A1.3 1.3 0 0 1 8.77 13.1Z"/><path d="M15.47 4.03L18.97 7.45"/></svg></div>
<div class="btn" style="left:1250.4px;top:958.7px;width:112.8px;height:41.8px;border-radius:8.5px;background:#b7870b;box-shadow:0 0 0 2px #faeec8;"><svg style="left:13.8px;top:10.53px" width="24" height="24" viewBox="0 0 24 24" fill="none" stroke="#ffffff" stroke-width="1.8" stroke-linecap="round" stroke-linejoin="round"><path d="M9.7 4H6.9A2.9 2.9 0 0 0 4 6.9V16.35A2.9 2.9 0 0 0 6.9 19.25H16.1A2.9 2.9 0 0 0 19 16.35V13.7"/><path d="M8.77 13.1V10.94L16.66 2.81A2.45 2.45 0 0 1 20.16 6.23L12.23 14.4H10.07A1.3 1.3 0 0 1 8.77 13.1Z"/><path d="M15.47 4.03L18.97 7.45"/></svg><span style="left:46.41px;top:13.87px;font-size:16.1px;letter-spacing:0.82px;color:#ffffff">Button</span></div>
<div class="btn" style="left:1376.1px;top:958.7px;width:41.6px;height:41.6px;border-radius:8.5px;background:#b7870b;box-shadow:0 0 0 2px #faeec8;"><svg style="left:8.6px;top:10.53px" width="24" height="24" viewBox="0 0 24 24" fill="none" stroke="#ffffff" stroke-width="1.8" stroke-linecap="round" stroke-linejoin="round"><path d="M9.7 4H6.9A2.9 2.9 0 0 0 4 6.9V16.35A2.9 2.9 0 0 0 6.9 19.25H16.1A2.9 2.9 0 0 0 19 16.35V13.7"/><path d="M8.77 13.1V10.94L16.66 2.81A2.45 2.45 0 0 1 20.16 6.23L12.23 14.4H10.07A1.3 1.3 0 0 1 8.77 13.1Z"/><path d="M15.47 4.03L18.97 7.45"/></svg></div>
<div class="btn" style="left:1516.7px;top:958.7px;width:112.8px;height:41.8px;border-radius:8.5px;background:#cc0339;box-shadow:0 0 0 2px #ffd9e3;"><svg style="left:13.8px;top:10.53px" width="24" height="24" viewBox="0 0 24 24" fill="none" stroke="#ffffff" stroke-width="1.8" stroke-linecap="round" stroke-linejoin="round"><path d="M9.7 4H6.9A2.9 2.9 0 0 0 4 6.9V16.35A2.9 2.9 0 0 0 6.9 19.25H16.1A2.9 2.9 0 0 0 19 16.35V13.7"/><path d="M8.77 13.1V10.94L16.66 2.81A2.45 2.45 0 0 1 20.16 6.23L12.23 14.4H10.07A1.3 1.3 0 0 1 8.77 13.1Z"/><path d="M15.47 4.03L18.97 7.45"/></svg><span style="left:46.41px;top:13.87px;font-size:16.1px;letter-spacing:0.82px;color:#ffffff">Button</span></div>
<div class="btn" style="left:1642.4px;top:958.7px;width:41.6px;height:41.6px;border-radius:8.5px;background:#cc0339;box-shadow:0 0 0 2px #ffd9e3;"><svg style="left:8.6px;top:10.53px" width="24" height="24" viewBox="0 0 24 24" fill="none" stroke="#ffffff" stroke-width="1.8" stroke-linecap="round" stroke-linejoin="round"><path d="M9.7 4H6.9A2.9 2.9 0 0 0 4 6.9V16.35A2.9 2.9 0 0 0 6.9 19.25H16.1A2.9 2.9 0 0 0 19 16.35V13.7"/><path d="M8.77 13.1V10.94L16.66 2.81A2.45 2.45 0 0 1 20.16 6.23L12.23 14.4H10.07A1.3 1.3 0 0 1 8.77 13.1Z"/><path d="M15.47 4.03L18.97 7.45"/></svg></div>
<div class="btn" style="left:1783px;top:958.7px;width:112.8px;height:41.8px;border-radius:8.5px;background:#fff;border:1.5px solid #cfcfcf;box-shadow:0 0 0 2px #ececec;"><svg style="left:12.3px;top:9.03px" width="24" height="24" viewBox="0 0 24 24" fill="none" stroke="#1f2027" stroke-width="1.8" stroke-linecap="round" stroke-linejoin="round"><path d="M9.7 4H6.9A2.9 2.9 0 0 0 4 6.9V16.35A2.9 2.9 0 0 0 6.9 19.25H16.1A2.9 2.9 0 0 0 19 16.35V13.7"/><path d="M8.77 13.1V10.94L16.66 2.81A2.45 2.45 0 0 1 20.16 6.23L12.23 14.4H10.07A1.3 1.3 0 0 1 8.77 13.1Z"/><path d="M15.47 4.03L18.97 7.45"/></svg><span style="left:44.91px;top:12.37px;font-size:16.1px;letter-spacing:0.82px;color:#1f2027">Button</span></div>
<div class="btn" style="left:1908.7px;top:958.7px;width:41.6px;height:41.6px;border-radius:8.5px;background:#fff;border:1.5px solid #cfcfcf;box-shadow:0 0 0 2px #ececec;"><svg style="left:7.1px;top:9.03px" width="24" height="24" viewBox="0 0 24 24" fill="none" stroke="#1f2027" stroke-width="1.8" stroke-linecap="round" stroke-linejoin="round"><path d="M9.7 4H6.9A2.9 2.9 0 0 0 4 6.9V16.35A2.9 2.9 0 0 0 6.9 19.25H16.1A2.9 2.9 0 0 0 19 16.35V13.7"/><path d="M8.77 13.1V10.94L16.66 2.81A2.45 2.45 0 0 1 20.16 6.23L12.23 14.4H10.07A1.3 1.3 0 0 1 8.77 13.1Z"/><path d="M15.47 4.03L18.97 7.45"/></svg></div>
<div class="btn" style="left:2049.3px;top:958.7px;width:112.8px;height:41.8px;border-radius:8.5px;background:#fff;border:1.5px solid #cfcfcf;box-shadow:0 0 0 2px #ececec,0 3px 6px rgba(0,0,0,0.08);"><svg style="left:12.3px;top:9.03px" width="24" height="24" viewBox="0 0 24 24" fill="none" stroke="#1f2027" stroke-width="1.8" stroke-linecap="round" stroke-linejoin="round"><path d="M9.7 4H6.9A2.9 2.9 0 0 0 4 6.9V16.35A2.9 2.9 0 0 0 6.9 19.25H16.1A2.9 2.9 0 0 0 19 16.35V13.7"/><path d="M8.77 13.1V10.94L16.66 2.81A2.45 2.45 0 0 1 20.16 6.23L12.23 14.4H10.07A1.3 1.3 0 0 1 8.77 13.1Z"/><path d="M15.47 4.03L18.97 7.45"/></svg><span style="left:44.91px;top:12.37px;font-size:16.1px;letter-spacing:0.82px;color:#1f2027">Button</span></div>
<div class="btn" style="left:2175px;top:958.7px;width:41.6px;height:41.6px;border-radius:8.5px;background:#fff;border:1.5px solid #cfcfcf;box-shadow:0 0 0 2px #ececec,0 3px 6px rgba(0,0,0,0.08);"><svg style="left:7.1px;top:9.03px" width="24" height="24" viewBox="0 0 24 24" fill="none" stroke="#1f2027" stroke-width="1.8" stroke-linecap="round" stroke-linejoin="round"><path d="M9.7 4H6.9A2.9 2.9 0 0 0 4 6.9V16.35A2.9 2.9 0 0 0 6.9 19.25H16.1A2.9 2.9 0 0 0 19 16.35V13.7"/><path d="M8.77 13.1V10.94L16.66 2.81A2.45 2.45 0 0 1 20.16 6.23L12.23 14.4H10.07A1.3 1.3 0 0 1 8.77 13.1Z"/><path d="M15.47 4.03L18.97 7.45"/></svg></div>
<div class="btn" style="left:2315.6px;top:958.7px;width:112.8px;height:41.8px;border-radius:8.5px;background:#fff;border:1.5px dashed #bcbcbc;border-radius:5px;box-shadow:0 0 0 2px #f0f0f0;"><svg style="left:12.3px;top:9.03px" width="24" height="24" viewBox="0 0 24 24" fill="none" stroke="#1f2027" stroke-width="1.8" stroke-linecap="round" stroke-linejoin="round"><path d="M9.7 4H6.9A2.9 2.9 0 0 0 4 6.9V16.35A2.9 2.9 0 0 0 6.9 19.25H16.1A2.9 2.9 0 0 0 19 16.35V13.7"/><path d="M8.77 13.1V10.94L16.66 2.81A2.45 2.45 0 0 1 20.16 6.23L12.23 14.4H10.07A1.3 1.3 0 0 1 8.77 13.1Z"/><path d="M15.47 4.03L18.97 7.45"/></svg><span style="left:44.91px;top:12.37px;font-size:16.1px;letter-spacing:0.82px;color:#1f2027">Button</span></div>
<div class="btn" style="left:2441.3px;top:958.7px;width:41.6px;height:41.6px;border-radius:8.5px;background:#fff;border:1.5px dashed #bcbcbc;border-radius:5px;box-shadow:0 0 0 2px #f0f0f0;"><svg style="left:7.1px;top:9.03px" width="24" height="24" viewBox="0 0 24 24" fill="none" stroke="#1f2027" stroke-width="1.8" stroke-linecap="round" stroke-linejoin="round"><path d="M9.7 4H6.9A2.9 2.9 0 0 0 4 6.9V16.35A2.9 2.9 0 0 0 6.9 19.25H16.1A2.9 2.9 0 0 0 19 16.35V13.7"/><path d="M8.77 13.1V10.94L16.66 2.81A2.45 2.45 0 0 1 20.16 6.23L12.23 14.4H10.07A1.3 1.3 0 0 1 8.77 13.1Z"/><path d="M15.47 4.03L18.97 7.45"/></svg></div>
<div class="btn" style="left:2581.9px;top:958.7px;width:112.8px;height:41.8px;border-radius:8.5px;background:#fff;border:1.5px solid #e2e2e2;box-shadow:0 0 0 1px #f0f0f0;"><svg style="left:12.3px;top:9.03px" width="24" height="24" viewBox="0 0 24 24" fill="none" stroke="#1f2027" stroke-width="1.8" stroke-linecap="round" stroke-linejoin="round"><path d="M9.7 4H6.9A2.9 2.9 0 0 0 4 6.9V16.35A2.9 2.9 0 0 0 6.9 19.25H16.1A2.9 2.9 0 0 0 19 16.35V13.7"/><path d="M8.77 13.1V10.94L16.66 2.81A2.45 2.45 0 0 1 20.16 6.23L12.23 14.4H10.07A1.3 1.3 0 0 1 8.77 13.1Z"/><path d="M15.47 4.03L18.97 7.45"/></svg><span style="left:44.91px;top:12.37px;font-size:16.1px;letter-spacing:0.82px;color:#1f2027">Button</span></div>
<div class="btn" style="left:2707.6px;top:958.7px;width:41.6px;height:41.6px;border-radius:8.5px;background:#fff;border:1.5px solid #e2e2e2;box-shadow:0 0 0 1px #f0f0f0;"><svg style="left:7.1px;top:9.03px" width="24" height="24" viewBox="0 0 24 24" fill="none" stroke="#1f2027" stroke-width="1.8" stroke-linecap="round" stroke-linejoin="round"><path d="M9.7 4H6.9A2.9 2.9 0 0 0 4 6.9V16.35A2.9 2.9 0 0 0 6.9 19.25H16.1A2.9 2.9 0 0 0 19 16.35V13.7"/><path d="M8.77 13.1V10.94L16.66 2.81A2.45 2.45 0 0 1 20.16 6.23L12.23 14.4H10.07A1.3 1.3 0 0 1 8.77 13.1Z"/><path d="M15.47 4.03L18.97 7.45"/></svg></div>
<div class="btn" style="left:451.5px;top:1099.6px;width:112.8px;height:41.8px;border-radius:8.5px;background:#7fa2f3;"><svg style="left:13.8px;top:10.53px" width="24" height="24" viewBox="0 0 24 24" fill="none" stroke="#ffffff" stroke-width="1.8" stroke-linecap="round" stroke-linejoin="round"><path d="M9.7 4H6.9A2.9 2.9 0 0 0 4 6.9V16.35A2.9 2.9 0 0 0 6.9 19.25H16.1A2.9 2.9 0 0 0 19 16.35V13.7"/><path d="M8.77 13.1V10.94L16.66 2.81A2.45 2.45 0 0 1 20.16 6.23L12.23 14.4H10.07A1.3 1.3 0 0 1 8.77 13.1Z"/><path d="M15.47 4.03L18.97 7.45"/></svg><span style="left:46.41px;top:13.87px;font-size:16.1px;letter-spacing:0.82px;color:#ffffff">Button</span></div>
<div class="btn" style="left:577.2px;top:1099.6px;width:41.6px;height:41.6px;border-radius:8.5px;background:#7fa2f3;"><svg style="left:8.6px;top:10.53px" width="24" height="24" viewBox="0 0 24 24" fill="none" stroke="#ffffff" stroke-width="1.8" stroke-linecap="round" stroke-linejoin="round"><path d="M9.7 4H6.9A2.9 2.9 0 0 0 4 6.9V16.35A2.9 2.9 0 0 0 6.9 19.25H16.1A2.9 2.9 0 0 0 19 16.35V13.7"/><path d="M8.77 13.1V10.94L16.66 2.81A2.45 2.45 0 0 1 20.16 6.23L12.23 14.4H10.07A1.3 1.3 0 0 1 8.77 13.1Z"/><path d="M15.47 4.03L18.97 7.45"/></svg></div>
<div class="btn" style="left:717.8px;top:1099.6px;width:112.8px;height:41.8px;border-radius:8.5px;background:#f6ab6c;"><svg style="left:13.8px;top:10.53px" width="24" height="24" viewBox="0 0 24 24" fill="none" stroke="#ffffff" stroke-width="1.8" stroke-linecap="round" stroke-linejoin="round"><path d="M9.7 4H6.9A2.9 2.9 0 0 0 4 6.9V16.35A2.9 2.9 0 0 0 6.9 19.25H16.1A2.9 2.9 0 0 0 19 16.35V13.7"/><path d="M8.77 13.1V10.94L16.66 2.81A2.45 2.45 0 0 1 20.16 6.23L12.23 14.4H10.07A1.3 1.3 0 0 1 8.77 13.1Z"/><path d="M15.47 4.03L18.97 7.45"/></svg><span style="left:46.41px;top:13.87px;font-size:16.1px;letter-spacing:0.82px;color:#ffffff">Button</span></div>
<div class="btn" style="left:843.5px;top:1099.6px;width:41.6px;height:41.6px;border-radius:8.5px;background:#f6ab6c;"><svg style="left:8.6px;top:10.53px" width="24" height="24" viewBox="0 0 24 24" fill="none" stroke="#ffffff" stroke-width="1.8" stroke-linecap="round" stroke-linejoin="round"><path d="M9.7 4H6.9A2.9 2.9 0 0 0 4 6.9V16.35A2.9 2.9 0 0 0 6.9 19.25H16.1A2.9 2.9 0 0 0 19 16.35V13.7"/><path d="M8.77 13.1V10.94L16.66 2.81A2.45 2.45 0 0 1 20.16 6.23L12.23 14.4H10.07A1.3 1.3 0 0 1 8.77 13.1Z"/><path d="M15.47 4.03L18.97 7.45"/></svg></div>
<div class="btn" style="left:984.1px;top:1099.6px;width:112.8px;height:41.8px;border-radius:8.5px;background:#84cda6;"><svg style="left:13.8px;top:10.53px" width="24" height="24" viewBox="0 0 24 24" fill="none" stroke="#ffffff" stroke-width="1.8" stroke-linecap="round" stroke-linejoin="round"><path d="M9.7 4H6.9A2.9 2.9 0 0 0 4 6.9V16.35A2.9 2.9 0 0 0 6.9 19.25H16.1A2.9 2.9 0 0 0 19 16.35V13.7"/><path d="M8.77 13.1V10.94L16.66 2.81A2.45 2.45 0 0 1 20.16 6.23L12.23 14.4H10.07A1.3 1.3 0 0 1 8.77 13.1Z"/><path d="M15.47 4.03L18.97 7.45"/></svg><span style="left:46.41px;top:13.87px;font-size:16.1px;letter-spacing:0.82px;color:#ffffff">Button</span></div>
<div class="btn" style="left:1109.8px;top:1099.6px;width:41.6px;height:41.6px;border-radius:8.5px;background:#84cda6;"><svg style="left:8.6px;top:10.53px" width="24" height="24" viewBox="0 0 24 24" fill="none" stroke="#ffffff" stroke-width="1.8" stroke-linecap="round" stroke-linejoin="round"><path d="M9.7 4H6.9A2.9 2.9 0 0 0 4 6.9V16.35A2.9 2.9 0 0 0 6.9 19.25H16.1A2.9 2.9 0 0 0 19 16.35V13.7"/><path d="M8.77 13.1V10.94L16.66 2.81A2.45 2.45 0 0 1 20.16 6.23L12.23 14.4H10.07A1.3 1.3 0 0 1 8.77 13.1Z"/><path d="M15.47 4.03L18.97 7.45"/></svg></div>
<div class="btn" style="left:1250.4px;top:1099.6px;width:112.8px;height:41.8px;border-radius:8.5px;background:#eecf78;"><svg style="left:13.8px;top:10.53px" width="24" height="24" viewBox="0 0 24 24" fill="none" stroke="#ffffff" stroke-width="1.8" stroke-linecap="round" stroke-linejoin="round"><path d="M9.7 4H6.9A2.9 2.9 0 0 0 4 6.9V16.35A2.9 2.9 0 0 0 6.9 19.25H16.1A2.9 2.9 0 0 0 19 16.35V13.7"/><path d="M8.77 13.1V10.94L16.66 2.81A2.45 2.45 0 0 1 20.16 6.23L12.23 14.4H10.07A1.3 1.3 0 0 1 8.77 13.1Z"/><path d="M15.47 4.03L18.97 7.45"/></svg><span style="left:46.41px;top:13.87px;font-size:16.1px;letter-spacing:0.82px;color:#ffffff">Button</span></div>
<div class="btn" style="left:1376.1px;top:1099.6px;width:41.6px;height:41.6px;border-radius:8.5px;background:#eecf78;"><svg style="left:8.6px;top:10.53px" width="24" height="24" viewBox="0 0 24 24" fill="none" stroke="#ffffff" stroke-width="1.8" stroke-linecap="round" stroke-linejoin="round"><path d="M9.7 4H6.9A2.9 2.9 0 0 0 4 6.9V16.35A2.9 2.9 0 0 0 6.9 19.25H16.1A2.9 2.9 0 0 0 19 16.35V13.7"/><path d="M8.77 13.1V10.94L16.66 2.81A2.45 2.45 0 0 1 20.16 6.23L12.23 14.4H10.07A1.3 1.3 0 0 1 8.77 13.1Z"/><path d="M15.47 4.03L18.97 7.45"/></svg></div>
<div class="btn" style="left:1516.7px;top:1099.6px;width:112.8px;height:41.8px;border-radius:8.5px;background:#f0668a;"><svg style="left:13.8px;top:10.53px" width="24" height="24" viewBox="0 0 24 24" fill="none" stroke="#ffffff" stroke-width="1.8" stroke-linecap="round" stroke-linejoin="round"><path d="M9.7 4H6.9A2.9 2.9 0 0 0 4 6.9V16.35A2.9 2.9 0 0 0 6.9 19.25H16.1A2.9 2.9 0 0 0 19 16.35V13.7"/><path d="M8.77 13.1V10.94L16.66 2.81A2.45 2.45 0 0 1 20.16 6.23L12.23 14.4H10.07A1.3 1.3 0 0 1 8.77 13.1Z"/><path d="M15.47 4.03L18.97 7.45"/></svg><span style="left:46.41px;top:13.87px;font-size:16.1px;letter-spacing:0.82px;color:#ffffff">Button</span></div>
<div class="btn" style="left:1642.4px;top:1099.6px;width:41.6px;height:41.6px;border-radius:8.5px;background:#f0668a;"><svg style="left:8.6px;top:10.53px" width="24" height="24" viewBox="0 0 24 24" fill="none" stroke="#ffffff" stroke-width="1.8" stroke-linecap="round" stroke-linejoin="round"><path d="M9.7 4H6.9A2.9 2.9 0 0 0 4 6.9V16.35A2.9 2.9 0 0 0 6.9 19.25H16.1A2.9 2.9 0 0 0 19 16.35V13.7"/><path d="M8.77 13.1V10.94L16.66 2.81A2.45 2.45 0 0 1 20.16 6.23L12.23 14.4H10.07A1.3 1.3 0 0 1 8.77 13.1Z"/><path d="M15.47 4.03L18.97 7.45"/></svg></div>
<div class="btn" style="left:1783px;top:1099.6px;width:112.8px;height:41.8px;border-radius:8.5px;background:#fff;border:1.5px solid #f0f0f0;"><svg style="left:12.3px;top:9.03px" width="24" height="24" viewBox="0 0 24 24" fill="none" stroke="#7a7a7a" stroke-width="1.8" stroke-linecap="round" stroke-linejoin="round"><path d="M9.7 4H6.9A2.9 2.9 0 0 0 4 6.9V16.35A2.9 2.9 0 0 0 6.9 19.25H16.1A2.9 2.9 0 0 0 19 16.35V13.7"/><path d="M8.77 13.1V10.94L16.66 2.81A2.45 2.45 0 0 1 20.16 6.23L12.23 14.4H10.07A1.3 1.3 0 0 1 8.77 13.1Z"/><path d="M15.47 4.03L18.97 7.45"/></svg><span style="left:44.91px;top:12.37px;font-size:16.1px;letter-spacing:0.82px;color:#7a7a7a">Button</span></div>
<div class="btn" style="left:1908.7px;top:1099.6px;width:41.6px;height:41.6px;border-radius:8.5px;background:#fff;border:1.5px solid #f0f0f0;"><svg style="left:7.1px;top:9.03px" width="24" height="24" viewBox="0 0 24 24" fill="none" stroke="#7a7a7a" stroke-width="1.8" stroke-linecap="round" stroke-linejoin="round"><path d="M9.7 4H6.9A2.9 2.9 0 0 0 4 6.9V16.35A2.9 2.9 0 0 0 6.9 19.25H16.1A2.9 2.9 0 0 0 19 16.35V13.7"/><path d="M8.77 13.1V10.94L16.66 2.81A2.45 2.45 0 0 1 20.16 6.23L12.23 14.4H10.07A1.3 1.3 0 0 1 8.77 13.1Z"/><path d="M15.47 4.03L18.97 7.45"/></svg></div>
<div class="btn" style="left:2049.3px;top:1099.6px;width:112.8px;height:41.8px;border-radius:8.5px;background:#fff;border:1.5px solid #f0f0f0;"><svg style="left:12.3px;top:9.03px" width="24" height="24" viewBox="0 0 24 24" fill="none" stroke="#7a7a7a" stroke-width="1.8" stroke-linecap="round" stroke-linejoin="round"><path d="M9.7 4H6.9A2.9 2.9 0 0 0 4 6.9V16.35A2.9 2.9 0 0 0 6.9 19.25H16.1A2.9 2.9 0 0 0 19 16.35V13.7"/><path d="M8.77 13.1V10.94L16.66 2.81A2.45 2.45 0 0 1 20.16 6.23L12.23 14.4H10.07A1.3 1.3 0 0 1 8.77 13.1Z"/><path d="M15.47 4.03L18.97 7.45"/></svg><span style="left:44.91px;top:12.37px;font-size:16.1px;letter-spacing:0.82px;color:#7a7a7a">Button</span></div>
<div class="btn" style="left:2175px;top:1099.6px;width:41.6px;height:41.6px;border-radius:8.5px;background:#fff;border:1.5px solid #f0f0f0;"><svg style="left:7.1px;top:9.03px" width="24" height="24" viewBox="0 0 24 24" fill="none" stroke="#7a7a7a" stroke-width="1.8" stroke-linecap="round" stroke-linejoin="round"><path d="M9.7 4H6.9A2.9 2.9 0 0 0 4 6.9V16.35A2.9 2.9 0 0 0 6.9 19.25H16.1A2.9 2.9 0 0 0 19 16.35V13.7"/><path d="M8.77 13.1V10.94L16.66 2.81A2.45 2.45 0 0 1 20.16 6.23L12.23 14.4H10.07A1.3 1.3 0 0 1 8.77 13.1Z"/><path d="M15.47 4.03L18.97 7.45"/></svg></div>
<div class="btn" style="left:2315.6px;top:1099.6px;width:112.8px;height:41.8px;border-radius:8.5px;background:#fff;border:1.5px dashed #e0e0e0;border-radius:5px;"><svg style="left:12.3px;top:9.03px" width="24" height="24" viewBox="0 0 24 24" fill="none" stroke="#7a7a7a" stroke-width="1.8" stroke-linecap="round" stroke-linejoin="round"><path d="M9.7 4H6.9A2.9 2.9 0 0 0 4 6.9V16.35A2.9 2.9 0 0 0 6.9 19.25H16.1A2.9 2.9 0 0 0 19 16.35V13.7"/><path d="M8.77 13.1V10.94L16.66 2.81A2.45 2.45 0 0 1 20.16 6.23L12.23 14.4H10.07A1.3 1.3 0 0 1 8.77 13.1Z"/><path d="M15.47 4.03L18.97 7.45"/></svg><span style="left:44.91px;top:12.37px;font-size:16.1px;letter-spacing:0.82px;color:#7a7a7a">Button</span></div>
<div class="btn" style="left:2441.3px;top:1099.6px;width:41.6px;height:41.6px;border-radius:8.5px;background:#fff;border:1.5px dashed #e0e0e0;border-radius:5px;"><svg style="left:7.1px;top:9.03px" width="24" height="24" viewBox="0 0 24 24" fill="none" stroke="#7a7a7a" stroke-width="1.8" stroke-linecap="round" stroke-linejoin="round"><path d="M9.7 4H6.9A2.9 2.9 0 0 0 4 6.9V16.35A2.9 2.9 0 0 0 6.9 19.25H16.1A2.9 2.9 0 0 0 19 16.35V13.7"/><path d="M8.77 13.1V10.94L16.66 2.81A2.45 2.45 0 0 1 20.16 6.23L12.23 14.4H10.07A1.3 1.3 0 0 1 8.77 13.1Z"/><path d="M15.47 4.03L18.97 7.45"/></svg></div>
<div class="btn" style="left:2581.9px;top:1099.6px;width:112.8px;height:41.8px;border-radius:8.5px;background:transparent;"><svg style="left:13.8px;top:10.53px" width="24" height="24" viewBox="0 0 24 24" fill="none" stroke="#a3a3a6" stroke-width="1.8" stroke-linecap="round" stroke-linejoin="round"><path d="M9.7 4H6.9A2.9 2.9 0 0 0 4 6.9V16.35A2.9 2.9 0 0 0 6.9 19.25H16.1A2.9 2.9 0 0 0 19 16.35V13.7"/><path d="M8.77 13.1V10.94L16.66 2.81A2.45 2.45 0 0 1 20.16 6.23L12.23 14.4H10.07A1.3 1.3 0 0 1 8.77 13.1Z"/><path d="M15.47 4.03L18.97 7.45"/></svg><span style="left:46.41px;top:13.87px;font-size:16.1px;letter-spacing:0.82px;color:#a3a3a6">Button</span></div>
<div class="btn" style="left:2707.6px;top:1099.6px;width:41.6px;height:41.6px;border-radius:8.5px;background:transparent;"><svg style="left:8.6px;top:10.53px" width="24" height="24" viewBox="0 0 24 24" fill="none" stroke="#a3a3a6" stroke-width="1.8" stroke-linecap="round" stroke-linejoin="round"><path d="M9.7 4H6.9A2.9 2.9 0 0 0 4 6.9V16.35A2.9 2.9 0 0 0 6.9 19.25H16.1A2.9 2.9 0 0 0 19 16.35V13.7"/><path d="M8.77 13.1V10.94L16.66 2.81A2.45 2.45 0 0 1 20.16 6.23L12.23 14.4H10.07A1.3 1.3 0 0 1 8.77 13.1Z"/><path d="M15.47 4.03L18.97 7.45"/></svg></div>
<div class="btn" style="left:461px;top:1243.55px;width:103.3px;height:35.3px;border-radius:7.5px;background:#2563eb;"><svg style="left:11.2px;top:8px" width="22" height="22" viewBox="0 0 24 24" fill="none" stroke="#ffffff" stroke-width="1.75" stroke-linecap="round" stroke-linejoin="round"><path d="M9.7 4H6.9A2.9 2.9 0 0 0 4 6.9V16.35A2.9 2.9 0 0 0 6.9 19.25H16.1A2.9 2.9 0 0 0 19 16.35V13.7"/><path d="M8.77 13.1V10.94L16.66 2.81A2.45 2.45 0 0 1 20.16 6.23L12.23 14.4H10.07A1.3 1.3 0 0 1 8.77 13.1Z"/><path d="M15.47 4.03L18.97 7.45"/></svg><span style="left:42.7px;top:10.9px;font-size:15px;letter-spacing:0.78px;color:#ffffff">Button</span></div>
<div class="btn" style="left:577.2px;top:1243.55px;width:35px;height:35px;border-radius:7.5px;background:#2563eb;"><svg style="left:6.1px;top:8px" width="22" height="22" viewBox="0 0 24 24" fill="none" stroke="#ffffff" stroke-width="1.75" stroke-linecap="round" stroke-linejoin="round"><path d="M9.7 4H6.9A2.9 2.9 0 0 0 4 6.9V16.35A2.9 2.9 0 0 0 6.9 19.25H16.1A2.9 2.9 0 0 0 19 16.35V13.7"/><path d="M8.77 13.1V10.94L16.66 2.81A2.45 2.45 0 0 1 20.16 6.23L12.23 14.4H10.07A1.3 1.3 0 0 1 8.77 13.1Z"/><path d="M15.47 4.03L18.97 7.45"/></svg></div>
<div class="btn" style="left:727.3px;top:1243.55px;width:103.3px;height:35.3px;border-radius:7.5px;background:#f27205;"><svg style="left:11.2px;top:8px" width="22" height="22" viewBox="0 0 24 24" fill="none" stroke="#ffffff" stroke-width="1.75" stroke-linecap="round" stroke-linejoin="round"><path d="M9.7 4H6.9A2.9 2.9 0 0 0 4 6.9V16.35A2.9 2.9 0 0 0 6.9 19.25H16.1A2.9 2.9 0 0 0 19 16.35V13.7"/><path d="M8.77 13.1V10.94L16.66 2.81A2.45 2.45 0 0 1 20.16 6.23L12.23 14.4H10.07A1.3 1.3 0 0 1 8.77 13.1Z"/><path d="M15.47 4.03L18.97 7.45"/></svg><span style="left:42.7px;top:10.9px;font-size:15px;letter-spacing:0.78px;color:#ffffff">Button</span></div>
<div class="btn" style="left:843.5px;top:1243.55px;width:35px;height:35px;border-radius:7.5px;background:#f27205;"><svg style="left:6.1px;top:8px" width="22" height="22" viewBox="0 0 24 24" fill="none" stroke="#ffffff" stroke-width="1.75" stroke-linecap="round" stroke-linejoin="round"><path d="M9.7 4H6.9A2.9 2.9 0 0 0 4 6.9V16.35A2.9 2.9 0 0 0 6.9 19.25H16.1A2.9 2.9 0 0 0 19 16.35V13.7"/><path d="M8.77 13.1V10.94L16.66 2.81A2.45 2.45 0 0 1 20.16 6.23L12.23 14.4H10.07A1.3 1.3 0 0 1 8.77 13.1Z"/><path d="M15.47 4.03L18.97 7.45"/></svg></div>
<div class="btn" style="left:993.6px;top:1243.55px;width:103.3px;height:35.3px;border-radius:7.5px;background:#2aa96a;"><svg style="left:11.2px;top:8px" width="22" height="22" viewBox="0 0 24 24" fill="none" stroke="#ffffff" stroke-width="1.75" stroke-linecap="round" stroke-linejoin="round"><path d="M9.7 4H6.9A2.9 2.9 0 0 0 4 6.9V16.35A2.9 2.9 0 0 0 6.9 19.25H16.1A2.9 2.9 0 0 0 19 16.35V13.7"/><path d="M8.77 13.1V10.94L16.66 2.81A2.45 2.45 0 0 1 20.16 6.23L12.23 14.4H10.07A1.3 1.3 0 0 1 8.77 13.1Z"/><path d="M15.47 4.03L18.97 7.45"/></svg><span style="left:42.7px;top:10.9px;font-size:15px;letter-spacing:0.78px;color:#ffffff">Button</span></div>
<div class="btn" style="left:1109.8px;top:1243.55px;width:35px;height:35px;border-radius:7.5px;background:#2aa96a;"><svg style="left:6.1px;top:8px" width="22" height="22" viewBox="0 0 24 24" fill="none" stroke="#ffffff" stroke-width="1.75" stroke-linecap="round" stroke-linejoin="round"><path d="M9.7 4H6.9A2.9 2.9 0 0 0 4 6.9V16.35A2.9 2.9 0 0 0 6.9 19.25H16.1A2.9 2.9 0 0 0 19 16.35V13.7"/><path d="M8.77 13.1V10.94L16.66 2.81A2.45 2.45 0 0 1 20.16 6.23L12.23 14.4H10.07A1.3 1.3 0 0 1 8.77 13.1Z"/><path d="M15.47 4.03L18.97 7.45"/></svg></div>
<div class="btn" style="left:1259.9px;top:1243.55px;width:103.3px;height:35.3px;border-radius:7.5px;background:#e9ab12;"><svg style="left:11.2px;top:8px" width="22" height="22" viewBox="0 0 24 24" fill="none" stroke="#ffffff" stroke-width="1.75" stroke-linecap="round" stroke-linejoin="round"><path d="M9.7 4H6.9A2.9 2.9 0 0 0 4 6.9V16.35A2.9 2.9 0 0 0 6.9 19.25H16.1A2.9 2.9 0 0 0 19 16.35V13.7"/><path d="M8.77 13.1V10.94L16.66 2.81A2.45 2.45 0 0 1 20.16 6.23L12.23 14.4H10.07A1.3 1.3 0 0 1 8.77 13.1Z"/><path d="M15.47 4.03L18.97 7.45"/></svg><span style="left:42.7px;top:10.9px;font-size:15px;letter-spacing:0.78px;color:#ffffff">Button</span></div>
<div class="btn" style="left:1376.1px;top:1243.55px;width:35px;height:35px;border-radius:7.5px;background:#e9ab12;"><svg style="left:6.1px;top:8px" width="22" height="22" viewBox="0 0 24 24" fill="none" stroke="#ffffff" stroke-width="1.75" stroke-linecap="round" stroke-linejoin="round"><path d="M9.7 4H6.9A2.9 2.9 0 0 0 4 6.9V16.35A2.9 2.9 0 0 0 6.9 19.25H16.1A2.9 2.9 0 0 0 19 16.35V13.7"/><path d="M8.77 13.1V10.94L16.66 2.81A2.45 2.45 0 0 1 20.16 6.23L12.23 14.4H10.07A1.3 1.3 0 0 1 8.77 13.1Z"/><path d="M15.47 4.03L18.97 7.45"/></svg></div>
<div class="btn" style="left:1526.2px;top:1243.55px;width:103.3px;height:35.3px;border-radius:7.5px;background:#e7033f;"><svg style="left:11.2px;top:8px" width="22" height="22" viewBox="0 0 24 24" fill="none" stroke="#ffffff" stroke-width="1.75" stroke-linecap="round" stroke-linejoin="round"><path d="M9.7 4H6.9A2.9 2.9 0 0 0 4 6.9V16.35A2.9 2.9 0 0 0 6.9 19.25H16.1A2.9 2.9 0 0 0 19 16.35V13.7"/><path d="M8.77 13.1V10.94L16.66 2.81A2.45 2.45 0 0 1 20.16 6.23L12.23 14.4H10.07A1.3 1.3 0 0 1 8.77 13.1Z"/><path d="M15.47 4.03L18.97 7.45"/></svg><span style="left:42.7px;top:10.9px;font-size:15px;letter-spacing:0.78px;color:#ffffff">Button</span></div>
<div class="btn" style="left:1642.4px;top:1243.55px;width:35px;height:35px;border-radius:7.5px;background:#e7033f;"><svg style="left:6.1px;top:8px" width="22" height="22" viewBox="0 0 24 24" fill="none" stroke="#ffffff" stroke-width="1.75" stroke-linecap="round" stroke-linejoin="round"><path d="M9.7 4H6.9A2.9 2.9 0 0 0 4 6.9V16.35A2.9 2.9 0 0 0 6.9 19.25H16.1A2.9 2.9 0 0 0 19 16.35V13.7"/><path d="M8.77 13.1V10.94L16.66 2.81A2.45 2.45 0 0 1 20.16 6.23L12.23 14.4H10.07A1.3 1.3 0 0 1 8.77 13.1Z"/><path d="M15.47 4.03L18.97 7.45"/></svg></div>
<div class="btn" style="left:1792.5px;top:1243.55px;width:103.3px;height:35.3px;border-radius:7.5px;background:#fff;border:1.5px solid #e6e6e6;"><svg style="left:9.7px;top:6.5px" width="22" height="22" viewBox="0 0 24 24" fill="none" stroke="#1f2027" stroke-width="1.75" stroke-linecap="round" stroke-linejoin="round"><path d="M9.7 4H6.9A2.9 2.9 0 0 0 4 6.9V16.35A2.9 2.9 0 0 0 6.9 19.25H16.1A2.9 2.9 0 0 0 19 16.35V13.7"/><path d="M8.77 13.1V10.94L16.66 2.81A2.45 2.45 0 0 1 20.16 6.23L12.23 14.4H10.07A1.3 1.3 0 0 1 8.77 13.1Z"/><path d="M15.47 4.03L18.97 7.45"/></svg><span style="left:41.2px;top:9.4px;font-size:15px;letter-spacing:0.78px;color:#1f2027">Button</span></div>
<div class="btn" style="left:1908.7px;top:1243.55px;width:35px;height:35px;border-radius:7.5px;background:#fff;border:1.5px solid #e6e6e6;"><svg style="left:4.6px;top:6.5px" width="22" height="22" viewBox="0 0 24 24" fill="none" stroke="#1f2027" stroke-width="1.75" stroke-linecap="round" stroke-linejoin="round"><path d="M9.7 4H6.9A2.9 2.9 0 0 0 4 6.9V16.35A2.9 2.9 0 0 0 6.9 19.25H16.1A2.9 2.9 0 0 0 19 16.35V13.7"/><path d="M8.77 13.1V10.94L16.66 2.81A2.45 2.45 0 0 1 20.16 6.23L12.23 14.4H10.07A1.3 1.3 0 0 1 8.77 13.1Z"/><path d="M15.47 4.03L18.97 7.45"/></svg></div>
<div class="btn" style="left:2058.8px;top:1243.55px;width:103.3px;height:35.3px;border-radius:7.5px;background:#fff;border:1.5px solid #e4e4e4;box-shadow:0 2px 4px rgba(0,0,0,0.07);"><svg style="left:9.7px;top:6.5px" width="22" height="22" viewBox="0 0 24 24" fill="none" stroke="#1f2027" stroke-width="1.75" stroke-linecap="round" stroke-linejoin="round"><path d="M9.7 4H6.9A2.9 2.9 0 0 0 4 6.9V16.35A2.9 2.9 0 0 0 6.9 19.25H16.1A2.9 2.9 0 0 0 19 16.35V13.7"/><path d="M8.77 13.1V10.94L16.66 2.81A2.45 2.45 0 0 1 20.16 6.23L12.23 14.4H10.07A1.3 1.3 0 0 1 8.77 13.1Z"/><path d="M15.47 4.03L18.97 7.45"/></svg><span style="left:41.2px;top:9.4px;font-size:15px;letter-spacing:0.78px;color:#1f2027">Button</span></div>
<div class="btn" style="left:2175px;top:1243.55px;width:35px;height:35px;border-radius:7.5px;background:#fff;border:1.5px solid #e4e4e4;box-shadow:0 2px 4px rgba(0,0,0,0.07);"><svg style="left:4.6px;top:6.5px" width="22" height="22" viewBox="0 0 24 24" fill="none" stroke="#1f2027" stroke-width="1.75" stroke-linecap="round" stroke-linejoin="round"><path d="M9.7 4H6.9A2.9 2.9 0 0 0 4 6.9V16.35A2.9 2.9 0 0 0 6.9 19.25H16.1A2.9 2.9 0 0 0 19 16.35V13.7"/><path d="M8.77 13.1V10.94L16.66 2.81A2.45 2.45 0 0 1 20.16 6.23L12.23 14.4H10.07A1.3 1.3 0 0 1 8.77 13.1Z"/><path d="M15.47 4.03L18.97 7.45"/></svg></div>
<div class="btn" style="left:2325.1px;top:1243.55px;width:103.3px;height:35.3px;border-radius:7.5px;background:#fff;border:1.5px dashed #c6c6c6;border-radius:5px;"><svg style="left:9.7px;top:6.5px" width="22" height="22" viewBox="0 0 24 24" fill="none" stroke="#1f2027" stroke-width="1.75" stroke-linecap="round" stroke-linejoin="round"><path d="M9.7 4H6.9A2.9 2.9 0 0 0 4 6.9V16.35A2.9 2.9 0 0 0 6.9 19.25H16.1A2.9 2.9 0 0 0 19 16.35V13.7"/><path d="M8.77 13.1V10.94L16.66 2.81A2.45 2.45 0 0 1 20.16 6.23L12.23 14.4H10.07A1.3 1.3 0 0 1 8.77 13.1Z"/><path d="M15.47 4.03L18.97 7.45"/></svg><span style="left:41.2px;top:9.4px;font-size:15px;letter-spacing:0.78px;color:#1f2027">Button</span></div>
<div class="btn" style="left:2441.3px;top:1243.55px;width:35px;height:35px;border-radius:7.5px;background:#fff;border:1.5px dashed #c6c6c6;border-radius:5px;"><svg style="left:4.6px;top:6.5px" width="22" height="22" viewBox="0 0 24 24" fill="none" stroke="#1f2027" stroke-width="1.75" stroke-linecap="round" stroke-linejoin="round"><path d="M9.7 4H6.9A2.9 2.9 0 0 0 4 6.9V16.35A2.9 2.9 0 0 0 6.9 19.25H16.1A2.9 2.9 0 0 0 19 16.35V13.7"/><path d="M8.77 13.1V10.94L16.66 2.81A2.45 2.45 0 0 1 20.16 6.23L12.23 14.4H10.07A1.3 1.3 0 0 1 8.77 13.1Z"/><path d="M15.47 4.03L18.97 7.45"/></svg></div>
<div class="btn" style="left:2591.4px;top:1243.55px;width:103.3px;height:35.3px;border-radius:7.5px;background:transparent;"><svg style="left:11.2px;top:8px" width="22" height="22" viewBox="0 0 24 24" fill="none" stroke="#6f7075" stroke-width="1.75" stroke-linecap="round" stroke-linejoin="round"><path d="M9.7 4H6.9A2.9 2.9 0 0 0 4 6.9V16.35A2.9 2.9 0 0 0 6.9 19.25H16.1A2.9 2.9 0 0 0 19 16.35V13.7"/><path d="M8.77 13.1V10.94L16.66 2.81A2.45 2.45 0 0 1 20.16 6.23L12.23 14.4H10.07A1.3 1.3 0 0 1 8.77 13.1Z"/><path d="M15.47 4.03L18.97 7.45"/></svg><span style="left:42.7px;top:10.9px;font-size:15px;letter-spacing:0.78px;color:#6f7075">Button</span></div>
<div class="btn" style="left:2707.6px;top:1243.55px;width:35px;height:35px;border-radius:7.5px;background:transparent;"><svg style="left:6.1px;top:8px" width="22" height="22" viewBox="0 0 24 24" fill="none" stroke="#6f7075" stroke-width="1.75" stroke-linecap="round" stroke-linejoin="round"><path d="M9.7 4H6.9A2.9 2.9 0 0 0 4 6.9V16.35A2.9 2.9 0 0 0 6.9 19.25H16.1A2.9 2.9 0 0 0 19 16.35V13.7"/><path d="M8.77 13.1V10.94L16.66 2.81A2.45 2.45 0 0 1 20.16 6.23L12.23 14.4H10.07A1.3 1.3 0 0 1 8.77 13.1Z"/><path d="M15.47 4.03L18.97 7.45"/></svg></div>
<div class="btn" style="left:461px;top:1381.55px;width:103.3px;height:35.3px;border-radius:7.5px;background:#1f52d2;"><svg style="left:11.2px;top:8px" width="22" height="22" viewBox="0 0 24 24" fill="none" stroke="#ffffff" stroke-width="1.75" stroke-linecap="round" stroke-linejoin="round"><path d="M9.7 4H6.9A2.9 2.9 0 0 0 4 6.9V16.35A2.9 2.9 0 0 0 6.9 19.25H16.1A2.9 2.9 0 0 0 19 16.35V13.7"/><path d="M8.77 13.1V10.94L16.66 2.81A2.45 2.45 0 0 1 20.16 6.23L12.23 14.4H10.07A1.3 1.3 0 0 1 8.77 13.1Z"/><path d="M15.47 4.03L18.97 7.45"/></svg><span style="left:42.7px;top:10.9px;font-size:15px;letter-spacing:0.78px;color:#ffffff">Button</span></div>
<div class="btn" style="left:577.2px;top:1381.55px;width:35px;height:35px;border-radius:7.5px;background:#1f52d2;"><svg style="left:6.1px;top:8px" width="22" height="22" viewBox="0 0 24 24" fill="none" stroke="#ffffff" stroke-width="1.75" stroke-linecap="round" stroke-linejoin="round"><path d="M9.7 4H6.9A2.9 2.9 0 0 0 4 6.9V16.35A2.9 2.9 0 0 0 6.9 19.25H16.1A2.9 2.9 0 0 0 19 16.35V13.7"/><path d="M8.77 13.1V10.94L16.66 2.81A2.45 2.45 0 0 1 20.16 6.23L12.23 14.4H10.07A1.3 1.3 0 0 1 8.77 13.1Z"/><path d="M15.47 4.03L18.97 7.45"/></svg></div>
<div class="btn" style="left:727.3px;top:1381.55px;width:103.3px;height:35.3px;border-radius:7.5px;background:#d5620a;"><svg style="left:11.2px;top:8px" width="22" height="22" viewBox="0 0 24 24" fill="none" stroke="#ffffff" stroke-width="1.75" stroke-linecap="round" stroke-linejoin="round"><path d="M9.7 4H6.9A2.9 2.9 0 0 0 4 6.9V16.35A2.9 2.9 0 0 0 6.9 19.25H16.1A2.9 2.9 0 0 0 19 16.35V13.7"/><path d="M8.77 13.1V10.94L16.66 2.81A2.45 2.45 0 0 1 20.16 6.23L12.23 14.4H10.07A1.3 1.3 0 0 1 8.77 13.1Z"/><path d="M15.47 4.03L18.97 7.45"/></svg><span style="left:42.7px;top:10.9px;font-size:15px;letter-spacing:0.78px;color:#ffffff">Button</span></div>
<div class="btn" style="left:843.5px;top:1381.55px;width:35px;height:35px;border-radius:7.5px;background:#d5620a;"><svg style="left:6.1px;top:8px" width="22" height="22" viewBox="0 0 24 24" fill="none" stroke="#ffffff" stroke-width="1.75" stroke-linecap="round" stroke-linejoin="round"><path d="M9.7 4H6.9A2.9 2.9 0 0 0 4 6.9V16.35A2.9 2.9 0 0 0 6.9 19.25H16.1A2.9 2.9 0 0 0 19 16.35V13.7"/><path d="M8.77 13.1V10.94L16.66 2.81A2.45 2.45 0 0 1 20.16 6.23L12.23 14.4H10.07A1.3 1.3 0 0 1 8.77 13.1Z"/><path d="M15.47 4.03L18.97 7.45"/></svg></div>
<div class="btn" style="left:993.6px;top:1381.55px;width:103.3px;height:35.3px;border-radius:7.5px;background:#218f58;"><svg style="left:11.2px;top:8px" width="22" height="22" viewBox="0 0 24 24" fill="none" stroke="#ffffff" stroke-width="1.75" stroke-linecap="round" stroke-linejoin="round"><path d="M9.7 4H6.9A2.9 2.9 0 0 0 4 6.9V16.35A2.9 2.9 0 0 0 6.9 19.25H16.1A2.9 2.9 0 0 0 19 16.35V13.7"/><path d="M8.77 13.1V10.94L16.66 2.81A2.45 2.45 0 0 1 20.16 6.23L12.23 14.4H10.07A1.3 1.3 0 0 1 8.77 13.1Z"/><path d="M15.47 4.03L18.97 7.45"/></svg><span style="left:42.7px;top:10.9px;font-size:15px;letter-spacing:0.78px;color:#ffffff">Button</span></div>
<div class="btn" style="left:1109.8px;top:1381.55px;width:35px;height:35px;border-radius:7.5px;background:#218f58;"><svg style="left:6.1px;top:8px" width="22" height="22" viewBox="0 0 24 24" fill="none" stroke="#ffffff" stroke-width="1.75" stroke-linecap="round" stroke-linejoin="round"><path d="M9.7 4H6.9A2.9 2.9 0 0 0 4 6.9V16.35A2.9 2.9 0 0 0 6.9 19.25H16.1A2.9 2.9 0 0 0 19 16.35V13.7"/><path d="M8.77 13.1V10.94L16.66 2.81A2.45 2.45 0 0 1 20.16 6.23L12.23 14.4H10.07A1.3 1.3 0 0 1 8.77 13.1Z"/><path d="M15.47 4.03L18.97 7.45"/></svg></div>
<div class="btn" style="left:1259.9px;top:1381.55px;width:103.3px;height:35.3px;border-radius:7.5px;background:#b7870b;"><svg style="left:11.2px;top:8px" width="22" height="22" viewBox="0 0 24 24" fill="none" stroke="#ffffff" stroke-width="1.75" stroke-linecap="round" stroke-linejoin="round"><path d="M9.7 4H6.9A2.9 2.9 0 0 0 4 6.9V16.35A2.9 2.9 0 0 0 6.9 19.25H16.1A2.9 2.9 0 0 0 19 16.35V13.7"/><path d="M8.77 13.1V10.94L16.66 2.81A2.45 2.45 0 0 1 20.16 6.23L12.23 14.4H10.07A1.3 1.3 0 0 1 8.77 13.1Z"/><path d="M15.47 4.03L18.97 7.45"/></svg><span style="left:42.7px;top:10.9px;font-size:15px;letter-spacing:0.78px;color:#ffffff">Button</span></div>
<div class="btn" style="left:1376.1px;top:1381.55px;width:35px;height:35px;border-radius:7.5px;background:#b7870b;"><svg style="left:6.1px;top:8px" width="22" height="22" viewBox="0 0 24 24" fill="none" stroke="#ffffff" stroke-width="1.75" stroke-linecap="round" stroke-linejoin="round"><path d="M9.7 4H6.9A2.9 2.9 0 0 0 4 6.9V16.35A2.9 2.9 0 0 0 6.9 19.25H16.1A2.9 2.9 0 0 0 19 16.35V13.7"/><path d="M8.77 13.1V10.94L16.66 2.81A2.45 2.45 0 0 1 20.16 6.23L12.23 14.4H10.07A1.3 1.3 0 0 1 8.77 13.1Z"/><path d="M15.47 4.03L18.97 7.45"/></svg></div>
<div class="btn" style="left:1526.2px;top:1381.55px;width:103.3px;height:35.3px;border-radius:7.5px;background:#cc0339;"><svg style="left:11.2px;top:8px" width="22" height="22" viewBox="0 0 24 24" fill="none" stroke="#ffffff" stroke-width="1.75" stroke-linecap="round" stroke-linejoin="round"><path d="M9.7 4H6.9A2.9 2.9 0 0 0 4 6.9V16.35A2.9 2.9 0 0 0 6.9 19.25H16.1A2.9 2.9 0 0 0 19 16.35V13.7"/><path d="M8.77 13.1V10.94L16.66 2.81A2.45 2.45 0 0 1 20.16 6.23L12.23 14.4H10.07A1.3 1.3 0 0 1 8.77 13.1Z"/><path d="M15.47 4.03L18.97 7.45"/></svg><span style="left:42.7px;top:10.9px;font-size:15px;letter-spacing:0.78px;color:#ffffff">Button</span></div>
<div class="btn" style="left:1642.4px;top:1381.55px;width:35px;height:35px;border-radius:7.5px;background:#cc0339;"><svg style="left:6.1px;top:8px" width="22" height="22" viewBox="0 0 24 24" fill="none" stroke="#ffffff" stroke-width="1.75" stroke-linecap="round" stroke-linejoin="round"><path d="M9.7 4H6.9A2.9 2.9 0 0 0 4 6.9V16.35A2.9 2.9 0 0 0 6.9 19.25H16.1A2.9 2.9 0 0 0 19 16.35V13.7"/><path d="M8.77 13.1V10.94L16.66 2.81A2.45 2.45 0 0 1 20.16 6.23L12.23 14.4H10.07A1.3 1.3 0 0 1 8.77 13.1Z"/><path d="M15.47 4.03L18.97 7.45"/></svg></div>
<div class="btn" style="left:1792.5px;top:1381.55px;width:103.3px;height:35.3px;border-radius:7.5px;background:#fff;border:1.5px solid #dedede;"><svg style="left:9.7px;top:6.5px" width="22" height="22" viewBox="0 0 24 24" fill="none" stroke="#1f2027" stroke-width="1.75" stroke-linecap="round" stroke-linejoin="round"><path d="M9.7 4H6.9A2.9 2.9 0 0 0 4 6.9V16.35A2.9 2.9 0 0 0 6.9 19.25H16.1A2.9 2.9 0 0 0 19 16.35V13.7"/><path d="M8.77 13.1V10.94L16.66 2.81A2.45 2.45 0 0 1 20.16 6.23L12.23 14.4H10.07A1.3 1.3 0 0 1 8.77 13.1Z"/><path d="M15.47 4.03L18.97 7.45"/></svg><span style="left:41.2px;top:9.4px;font-size:15px;letter-spacing:0.78px;color:#1f2027">Button</span></div>
<div class="btn" style="left:1908.7px;top:1381.55px;width:35px;height:35px;border-radius:7.5px;background:#fff;border:1.5px solid #dedede;"><svg style="left:4.6px;top:6.5px" width="22" height="22" viewBox="0 0 24 24" fill="none" stroke="#1f2027" stroke-width="1.75" stroke-linecap="round" stroke-linejoin="round"><path d="M9.7 4H6.9A2.9 2.9 0 0 0 4 6.9V16.35A2.9 2.9 0 0 0 6.9 19.25H16.1A2.9 2.9 0 0 0 19 16.35V13.7"/><path d="M8.77 13.1V10.94L16.66 2.81A2.45 2.45 0 0 1 20.16 6.23L12.23 14.4H10.07A1.3 1.3 0 0 1 8.77 13.1Z"/><path d="M15.47 4.03L18.97 7.45"/></svg></div>
<div class="btn" style="left:2058.8px;top:1381.55px;width:103.3px;height:35.3px;border-radius:7.5px;background:#f0f0f0;border:1.5px solid #d4d4d4;box-shadow:0 2px 4px rgba(0,0,0,0.07);"><svg style="left:9.7px;top:6.5px" width="22" height="22" viewBox="0 0 24 24" fill="none" stroke="#1f2027" stroke-width="1.75" stroke-linecap="round" stroke-linejoin="round"><path d="M9.7 4H6.9A2.9 2.9 0 0 0 4 6.9V16.35A2.9 2.9 0 0 0 6.9 19.25H16.1A2.9 2.9 0 0 0 19 16.35V13.7"/><path d="M8.77 13.1V10.94L16.66 2.81A2.45 2.45 0 0 1 20.16 6.23L12.23 14.4H10.07A1.3 1.3 0 0 1 8.77 13.1Z"/><path d="M15.47 4.03L18.97 7.45"/></svg><span style="left:41.2px;top:9.4px;font-size:15px;letter-spacing:0.78px;color:#1f2027">Button</span></div>
<div class="btn" style="left:2175px;top:1381.55px;width:35px;height:35px;border-radius:7.5px;background:#f0f0f0;border:1.5px solid #d4d4d4;box-shadow:0 2px 4px rgba(0,0,0,0.07);"><svg style="left:4.6px;top:6.5px" width="22" height="22" viewBox="0 0 24 24" fill="none" stroke="#1f2027" stroke-width="1.75" stroke-linecap="round" stroke-linejoin="round"><path d="M9.7 4H6.9A2.9 2.9 0 0 0 4 6.9V16.35A2.9 2.9 0 0 0 6.9 19.25H16.1A2.9 2.9 0 0 0 19 16.35V13.7"/><path d="M8.77 13.1V10.94L16.66 2.81A2.45 2.45 0 0 1 20.16 6.23L12.23 14.4H10.07A1.3 1.3 0 0 1 8.77 13.1Z"/><path d="M15.47 4.03L18.97 7.45"/></svg></div>
<div class="btn" style="left:2325.1px;top:1381.55px;width:103.3px;height:35.3px;border-radius:7.5px;background:#fff;border:1.5px dashed #c6c6c6;border-radius:5px;"><svg style="left:9.7px;top:6.5px" width="22" height="22" viewBox="0 0 24 24" fill="none" stroke="#1f2027" stroke-width="1.75" stroke-linecap="round" stroke-linejoin="round"><path d="M9.7 4H6.9A2.9 2.9 0 0 0 4 6.9V16.35A2.9 2.9 0 0 0 6.9 19.25H16.1A2.9 2.9 0 0 0 19 16.35V13.7"/><path d="M8.77 13.1V10.94L16.66 2.81A2.45 2.45 0 0 1 20.16 6.23L12.23 14.4H10.07A1.3 1.3 0 0 1 8.77 13.1Z"/><path d="M15.47 4.03L18.97 7.45"/></svg><span style="left:41.2px;top:9.4px;font-size:15px;letter-spacing:0.78px;color:#1f2027">Button</span></div>
<div class="btn" style="left:2441.3px;top:1381.55px;width:35px;height:35px;border-radius:7.5px;background:#fff;border:1.5px dashed #c6c6c6;border-radius:5px;"><svg style="left:4.6px;top:6.5px" width="22" height="22" viewBox="0 0 24 24" fill="none" stroke="#1f2027" stroke-width="1.75" stroke-linecap="round" stroke-linejoin="round"><path d="M9.7 4H6.9A2.9 2.9 0 0 0 4 6.9V16.35A2.9 2.9 0 0 0 6.9 19.25H16.1A2.9 2.9 0 0 0 19 16.35V13.7"/><path d="M8.77 13.1V10.94L16.66 2.81A2.45 2.45 0 0 1 20.16 6.23L12.23 14.4H10.07A1.3 1.3 0 0 1 8.77 13.1Z"/><path d="M15.47 4.03L18.97 7.45"/></svg></div>
<div class="btn" style="left:2591.4px;top:1381.55px;width:103.3px;height:35.3px;border-radius:7.5px;background:transparent;"><svg style="left:11.2px;top:8px" width="22" height="22" viewBox="0 0 24 24" fill="none" stroke="#1f2027" stroke-width="1.75" stroke-linecap="round" stroke-linejoin="round"><path d="M9.7 4H6.9A2.9 2.9 0 0 0 4 6.9V16.35A2.9 2.9 0 0 0 6.9 19.25H16.1A2.9 2.9 0 0 0 19 16.35V13.7"/><path d="M8.77 13.1V10.94L16.66 2.81A2.45 2.45 0 0 1 20.16 6.23L12.23 14.4H10.07A1.3 1.3 0 0 1 8.77 13.1Z"/><path d="M15.47 4.03L18.97 7.45"/></svg><span style="left:42.7px;top:10.9px;font-size:15px;letter-spacing:0.78px;color:#1f2027">Button</span></div>
<div class="btn" style="left:2707.6px;top:1381.55px;width:35px;height:35px;border-radius:7.5px;background:transparent;"><svg style="left:6.1px;top:8px" width="22" height="22" viewBox="0 0 24 24" fill="none" stroke="#1f2027" stroke-width="1.75" stroke-linecap="round" stroke-linejoin="round"><path d="M9.7 4H6.9A2.9 2.9 0 0 0 4 6.9V16.35A2.9 2.9 0 0 0 6.9 19.25H16.1A2.9 2.9 0 0 0 19 16.35V13.7"/><path d="M8.77 13.1V10.94L16.66 2.81A2.45 2.45 0 0 1 20.16 6.23L12.23 14.4H10.07A1.3 1.3 0 0 1 8.77 13.1Z"/><path d="M15.47 4.03L18.97 7.45"/></svg></div>
<div class="btn" style="left:461px;top:1519.85px;width:103.3px;height:35.3px;border-radius:7.5px;background:#1f52d2;box-shadow:0 0 0 2px #d8f0ff;"><svg style="left:11.2px;top:8px" width="22" height="22" viewBox="0 0 24 24" fill="none" stroke="#ffffff" stroke-width="1.75" stroke-linecap="round" stroke-linejoin="round"><path d="M9.7 4H6.9A2.9 2.9 0 0 0 4 6.9V16.35A2.9 2.9 0 0 0 6.9 19.25H16.1A2.9 2.9 0 0 0 19 16.35V13.7"/><path d="M8.77 13.1V10.94L16.66 2.81A2.45 2.45 0 0 1 20.16 6.23L12.23 14.4H10.07A1.3 1.3 0 0 1 8.77 13.1Z"/><path d="M15.47 4.03L18.97 7.45"/></svg><span style="left:42.7px;top:10.9px;font-size:15px;letter-spacing:0.78px;color:#ffffff">Button</span></div>
<div class="btn" style="left:577.2px;top:1519.85px;width:35px;height:35px;border-radius:7.5px;background:#1f52d2;box-shadow:0 0 0 2px #d8f0ff;"><svg style="left:6.1px;top:8px" width="22" height="22" viewBox="0 0 24 24" fill="none" stroke="#ffffff" stroke-width="1.75" stroke-linecap="round" stroke-linejoin="round"><path d="M9.7 4H6.9A2.9 2.9 0 0 0 4 6.9V16.35A2.9 2.9 0 0 0 6.9 19.25H16.1A2.9 2.9 0 0 0 19 16.35V13.7"/><path d="M8.77 13.1V10.94L16.66 2.81A2.45 2.45 0 0 1 20.16 6.23L12.23 14.4H10.07A1.3 1.3 0 0 1 8.77 13.1Z"/><path d="M15.47 4.03L18.97 7.45"/></svg></div>
<div class="btn" style="left:727.3px;top:1519.85px;width:103.3px;height:35.3px;border-radius:7.5px;background:#d5620a;box-shadow:0 0 0 2px #ffe6d2;"><svg style="left:11.2px;top:8px" width="22" height="22" viewBox="0 0 24 24" fill="none" stroke="#ffffff" stroke-width="1.75" stroke-linecap="round" stroke-linejoin="round"><path d="M9.7 4H6.9A2.9 2.9 0 0 0 4 6.9V16.35A2.9 2.9 0 0 0 6.9 19.25H16.1A2.9 2.9 0 0 0 19 16.35V13.7"/><path d="M8.77 13.1V10.94L16.66 2.81A2.45 2.45 0 0 1 20.16 6.23L12.23 14.4H10.07A1.3 1.3 0 0 1 8.77 13.1Z"/><path d="M15.47 4.03L18.97 7.45"/></svg><span style="left:42.7px;top:10.9px;font-size:15px;letter-spacing:0.78px;color:#ffffff">Button</span></div>
<div class="btn" style="left:843.5px;top:1519.85px;width:35px;height:35px;border-radius:7.5px;background:#d5620a;box-shadow:0 0 0 2px #ffe6d2;"><svg style="left:6.1px;top:8px" width="22" height="22" viewBox="0 0 24 24" fill="none" stroke="#ffffff" stroke-width="1.75" stroke-linecap="round" stroke-linejoin="round"><path d="M9.7 4H6.9A2.9 2.9 0 0 0 4 6.9V16.35A2.9 2.9 0 0 0 6.9 19.25H16.1A2.9 2.9 0 0 0 19 16.35V13.7"/><path d="M8.77 13.1V10.94L16.66 2.81A2.45 2.45 0 0 1 20.16 6.23L12.23 14.4H10.07A1.3 1.3 0 0 1 8.77 13.1Z"/><path d="M15.47 4.03L18.97 7.45"/></svg></div>
<div class="btn" style="left:993.6px;top:1519.85px;width:103.3px;height:35.3px;border-radius:7.5px;background:#218f58;box-shadow:0 0 0 2px #d2f4e2;"><svg style="left:11.2px;top:8px" width="22" height="22" viewBox="0 0 24 24" fill="none" stroke="#ffffff" stroke-width="1.75" stroke-linecap="round" stroke-linejoin="round"><path d="M9.7 4H6.9A2.9 2.9 0 0 0 4 6.9V16.35A2.9 2.9 0 0 0 6.9 19.25H16.1A2.9 2.9 0 0 0 19 16.35V13.7"/><path d="M8.77 13.1V10.94L16.66 2.81A2.45 2.45 0 0 1 20.16 6.23L12.23 14.4H10.07A1.3 1.3 0 0 1 8.77 13.1Z"/><path d="M15.47 4.03L18.97 7.45"/></svg><span style="left:42.7px;top:10.9px;font-size:15px;letter-spacing:0.78px;color:#ffffff">Button</span></div>
<div class="btn" style="left:1109.8px;top:1519.85px;width:35px;height:35px;border-radius:7.5px;background:#218f58;box-shadow:0 0 0 2px #d2f4e2;"><svg style="left:6.1px;top:8px" width="22" height="22" viewBox="0 0 24 24" fill="none" stroke="#ffffff" stroke-width="1.75" stroke-linecap="round" stroke-linejoin="round"><path d="M9.7 4H6.9A2.9 2.9 0 0 0 4 6.9V16.35A2.9 2.9 0 0 0 6.9 19.25H16.1A2.9 2.9 0 0 0 19 16.35V13.7"/><path d="M8.77 13.1V10.94L16.66 2.81A2.45 2.45 0 0 1 20.16 6.23L12.23 14.4H10.07A1.3 1.3 0 0 1 8.77 13.1Z"/><path d="M15.47 4.03L18.97 7.45"/></svg></div>
<div class="btn" style="left:1259.9px;top:1519.85px;width:103.3px;height:35.3px;border-radius:7.5px;background:#b7870b;box-shadow:0 0 0 2px #faeec8;"><svg style="left:11.2px;top:8px" width="22" height="22" viewBox="0 0 24 24" fill="none" stroke="#ffffff" stroke-width="1.75" stroke-linecap="round" stroke-linejoin="round"><path d="M9.7 4H6.9A2.9 2.9 0 0 0 4 6.9V16.35A2.9 2.9 0 0 0 6.9 19.25H16.1A2.9 2.9 0 0 0 19 16.35V13.7"/><path d="M8.77 13.1V10.94L16.66 2.81A2.45 2.45 0 0 1 20.16 6.23L12.23 14.4H10.07A1.3 1.3 0 0 1 8.77 13.1Z"/><path d="M15.47 4.03L18.97 7.45"/></svg><span style="left:42.7px;top:10.9px;font-size:15px;letter-spacing:0.78px;color:#ffffff">Button</span></div>
<div class="btn" style="left:1376.1px;top:1519.85px;width:35px;height:35px;border-radius:7.5px;background:#b7870b;box-shadow:0 0 0 2px #faeec8;"><svg style="left:6.1px;top:8px" width="22" height="22" viewBox="0 0 24 24" fill="none" stroke="#ffffff" stroke-width="1.75" stroke-linecap="round" stroke-linejoin="round"><path d="M9.7 4H6.9A2.9 2.9 0 0 0 4 6.9V16.35A2.9 2.9 0 0 0 6.9 19.25H16.1A2.9 2.9 0 0 0 19 16.35V13.7"/><path d="M8.77 13.1V10.94L16.66 2.81A2.45 2.45 0 0 1 20.16 6.23L12.23 14.4H10.07A1.3 1.3 0 0 1 8.77 13.1Z"/><path d="M15.47 4.03L18.97 7.45"/></svg></div>
<div class="btn" style="left:1526.2px;top:1519.85px;width:103.3px;height:35.3px;border-radius:7.5px;background:#cc0339;box-shadow:0 0 0 2px #ffd9e3;"><svg style="left:11.2px;top:8px" width="22" height="22" viewBox="0 0 24 24" fill="none" stroke="#ffffff" stroke-width="1.75" stroke-linecap="round" stroke-linejoin="round"><path d="M9.7 4H6.9A2.9 2.9 0 0 0 4 6.9V16.35A2.9 2.9 0 0 0 6.9 19.25H16.1A2.9 2.9 0 0 0 19 16.35V13.7"/><path d="M8.77 13.1V10.94L16.66 2.81A2.45 2.45 0 0 1 20.16 6.23L12.23 14.4H10.07A1.3 1.3 0 0 1 8.77 13.1Z"/><path d="M15.47 4.03L18.97 7.45"/></svg><span style="left:42.7px;top:10.9px;font-size:15px;letter-spacing:0.78px;color:#ffffff">Button</span></div>
<div class="btn" style="left:1642.4px;top:1519.85px;width:35px;height:35px;border-radius:7.5px;background:#cc0339;box-shadow:0 0 0 2px #ffd9e3;"><svg style="left:6.1px;top:8px" width="22" height="22" viewBox="0 0 24 24" fill="none" stroke="#ffffff" stroke-width="1.75" stroke-linecap="round" stroke-linejoin="round"><path d="M9.7 4H6.9A2.9 2.9 0 0 0 4 6.9V16.35A2.9 2.9 0 0 0 6.9 19.25H16.1A2.9 2.9 0 0 0 19 16.35V13.7"/><path d="M8.77 13.1V10.94L16.66 2.81A2.45 2.45 0 0 1 20.16 6.23L12.23 14.4H10.07A1.3 1.3 0 0 1 8.77 13.1Z"/><path d="M15.47 4.03L18.97 7.45"/></svg></div>
<div class="btn" style="left:1792.5px;top:1519.85px;width:103.3px;height:35.3px;border-radius:7.5px;background:#fff;border:1.5px solid #cfcfcf;box-shadow:0 0 0 2px #ececec;"><svg style="left:9.7px;top:6.5px" width="22" height="22" viewBox="0 0 24 24" fill="none" stroke="#1f2027" stroke-width="1.75" stroke-linecap="round" stroke-linejoin="round"><path d="M9.7 4H6.9A2.9 2.9 0 0 0 4 6.9V16.35A2.9 2.9 0 0 0 6.9 19.25H16.1A2.9 2.9 0 0 0 19 16.35V13.7"/><path d="M8.77 13.1V10.94L16.66 2.81A2.45 2.45 0 0 1 20.16 6.23L12.23 14.4H10.07A1.3 1.3 0 0 1 8.77 13.1Z"/><path d="M15.47 4.03L18.97 7.45"/></svg><span style="left:41.2px;top:9.4px;font-size:15px;letter-spacing:0.78px;color:#1f2027">Button</span></div>
<div class="btn" style="left:1908.7px;top:1519.85px;width:35px;height:35px;border-radius:7.5px;background:#fff;border:1.5px solid #cfcfcf;box-shadow:0 0 0 2px #ececec;"><svg style="left:4.6px;top:6.5px" width="22" height="22" viewBox="0 0 24 24" fill="none" stroke="#1f2027" stroke-width="1.75" stroke-linecap="round" stroke-linejoin="round"><path d="M9.7 4H6.9A2.9 2.9 0 0 0 4 6.9V16.35A2.9 2.9 0 0 0 6.9 19.25H16.1A2.9 2.9 0 0 0 19 16.35V13.7"/><path d="M8.77 13.1V10.94L16.66 2.81A2.45 2.45 0 0 1 20.16 6.23L12.23 14.4H10.07A1.3 1.3 0 0 1 8.77 13.1Z"/><path d="M15.47 4.03L18.97 7.45"/></svg></div>
<div class="btn" style="left:2058.8px;top:1519.85px;width:103.3px;height:35.3px;border-radius:7.5px;background:#fff;border:1.5px solid #cfcfcf;box-shadow:0 0 0 2px #ececec,0 3px 6px rgba(0,0,0,0.08);"><svg style="left:9.7px;top:6.5px" width="22" height="22" viewBox="0 0 24 24" fill="none" stroke="#1f2027" stroke-width="1.75" stroke-linecap="round" stroke-linejoin="round"><path d="M9.7 4H6.9A2.9 2.9 0 0 0 4 6.9V16.35A2.9 2.9 0 0 0 6.9 19.25H16.1A2.9 2.9 0 0 0 19 16.35V13.7"/><path d="M8.77 13.1V10.94L16.66 2.81A2.45 2.45 0 0 1 20.16 6.23L12.23 14.4H10.07A1.3 1.3 0 0 1 8.77 13.1Z"/><path d="M15.47 4.03L18.97 7.45"/></svg><span style="left:41.2px;top:9.4px;font-size:15px;letter-spacing:0.78px;color:#1f2027">Button</span></div>
<div class="btn" style="left:2175px;top:1519.85px;width:35px;height:35px;border-radius:7.5px;background:#fff;border:1.5px solid #cfcfcf;box-shadow:0 0 0 2px #ececec,0 3px 6px rgba(0,0,0,0.08);"><svg style="left:4.6px;top:6.5px" width="22" height="22" viewBox="0 0 24 24" fill="none" stroke="#1f2027" stroke-width="1.75" stroke-linecap="round" stroke-linejoin="round"><path d="M9.7 4H6.9A2.9 2.9 0 0 0 4 6.9V16.35A2.9 2.9 0 0 0 6.9 19.25H16.1A2.9 2.9 0 0 0 19 16.35V13.7"/><path d="M8.77 13.1V10.94L16.66 2.81A2.45 2.45 0 0 1 20.16 6.23L12.23 14.4H10.07A1.3 1.3 0 0 1 8.77 13.1Z"/><path d="M15.47 4.03L18.97 7.45"/></svg></div>
<div class="btn" style="left:2325.1px;top:1519.85px;width:103.3px;height:35.3px;border-radius:7.5px;background:#fff;border:1.5px dashed #bcbcbc;border-radius:5px;box-shadow:0 0 0 2px #f0f0f0;"><svg style="left:9.7px;top:6.5px" width="22" height="22" viewBox="0 0 24 24" fill="none" stroke="#1f2027" stroke-width="1.75" stroke-linecap="round" stroke-linejoin="round"><path d="M9.7 4H6.9A2.9 2.9 0 0 0 4 6.9V16.35A2.9 2.9 0 0 0 6.9 19.25H16.1A2.9 2.9 0 0 0 19 16.35V13.7"/><path d="M8.77 13.1V10.94L16.66 2.81A2.45 2.45 0 0 1 20.16 6.23L12.23 14.4H10.07A1.3 1.3 0 0 1 8.77 13.1Z"/><path d="M15.47 4.03L18.97 7.45"/></svg><span style="left:41.2px;top:9.4px;font-size:15px;letter-spacing:0.78px;color:#1f2027">Button</span></div>
<div class="btn" style="left:2441.3px;top:1519.85px;width:35px;height:35px;border-radius:7.5px;background:#fff;border:1.5px dashed #bcbcbc;border-radius:5px;box-shadow:0 0 0 2px #f0f0f0;"><svg style="left:4.6px;top:6.5px" width="22" height="22" viewBox="0 0 24 24" fill="none" stroke="#1f2027" stroke-width="1.75" stroke-linecap="round" stroke-linejoin="round"><path d="M9.7 4H6.9A2.9 2.9 0 0 0 4 6.9V16.35A2.9 2.9 0 0 0 6.9 19.25H16.1A2.9 2.9 0 0 0 19 16.35V13.7"/><path d="M8.77 13.1V10.94L16.66 2.81A2.45 2.45 0 0 1 20.16 6.23L12.23 14.4H10.07A1.3 1.3 0 0 1 8.77 13.1Z"/><path d="M15.47 4.03L18.97 7.45"/></svg></div>
<div class="btn" style="left:2591.4px;top:1519.85px;width:103.3px;height:35.3px;border-radius:7.5px;background:#fff;border:1.5px solid #e2e2e2;box-shadow:0 0 0 1px #f0f0f0;"><svg style="left:9.7px;top:6.5px" width="22" height="22" viewBox="0 0 24 24" fill="none" stroke="#1f2027" stroke-width="1.75" stroke-linecap="round" stroke-linejoin="round"><path d="M9.7 4H6.9A2.9 2.9 0 0 0 4 6.9V16.35A2.9 2.9 0 0 0 6.9 19.25H16.1A2.9 2.9 0 0 0 19 16.35V13.7"/><path d="M8.77 13.1V10.94L16.66 2.81A2.45 2.45 0 0 1 20.16 6.23L12.23 14.4H10.07A1.3 1.3 0 0 1 8.77 13.1Z"/><path d="M15.47 4.03L18.97 7.45"/></svg><span style="left:41.2px;top:9.4px;font-size:15px;letter-spacing:0.78px;color:#1f2027">Button</span></div>
<div class="btn" style="left:2707.6px;top:1519.85px;width:35px;height:35px;border-radius:7.5px;background:#fff;border:1.5px solid #e2e2e2;box-shadow:0 0 0 1px #f0f0f0;"><svg style="left:4.6px;top:6.5px" width="22" height="22" viewBox="0 0 24 24" fill="none" stroke="#1f2027" stroke-width="1.75" stroke-linecap="round" stroke-linejoin="round"><path d="M9.7 4H6.9A2.9 2.9 0 0 0 4 6.9V16.35A2.9 2.9 0 0 0 6.9 19.25H16.1A2.9 2.9 0 0 0 19 16.35V13.7"/><path d="M8.77 13.1V10.94L16.66 2.81A2.45 2.45 0 0 1 20.16 6.23L12.23 14.4H10.07A1.3 1.3 0 0 1 8.77 13.1Z"/><path d="M15.47 4.03L18.97 7.45"/></svg></div>
<div class="btn" style="left:461px;top:1663.95px;width:103.3px;height:35.3px;border-radius:7.5px;background:#7fa2f3;"><svg style="left:11.2px;top:8px" width="22" height="22" viewBox="0 0 24 24" fill="none" stroke="#ffffff" stroke-width="1.75" stroke-linecap="round" stroke-linejoin="round"><path d="M9.7 4H6.9A2.9 2.9 0 0 0 4 6.9V16.35A2.9 2.9 0 0 0 6.9 19.25H16.1A2.9 2.9 0 0 0 19 16.35V13.7"/><path d="M8.77 13.1V10.94L16.66 2.81A2.45 2.45 0 0 1 20.16 6.23L12.23 14.4H10.07A1.3 1.3 0 0 1 8.77 13.1Z"/><path d="M15.47 4.03L18.97 7.45"/></svg><span style="left:42.7px;top:10.9px;font-size:15px;letter-spacing:0.78px;color:#ffffff">Button</span></div>
<div class="btn" style="left:577.2px;top:1663.95px;width:35px;height:35px;border-radius:7.5px;background:#7fa2f3;"><svg style="left:6.1px;top:8px" width="22" height="22" viewBox="0 0 24 24" fill="none" stroke="#ffffff" stroke-width="1.75" stroke-linecap="round" stroke-linejoin="round"><path d="M9.7 4H6.9A2.9 2.9 0 0 0 4 6.9V16.35A2.9 2.9 0 0 0 6.9 19.25H16.1A2.9 2.9 0 0 0 19 16.35V13.7"/><path d="M8.77 13.1V10.94L16.66 2.81A2.45 2.45 0 0 1 20.16 6.23L12.23 14.4H10.07A1.3 1.3 0 0 1 8.77 13.1Z"/><path d="M15.47 4.03L18.97 7.45"/></svg></div>
<div class="btn" style="left:727.3px;top:1663.95px;width:103.3px;height:35.3px;border-radius:7.5px;background:#f6ab6c;"><svg style="left:11.2px;top:8px" width="22" height="22" viewBox="0 0 24 24" fill="none" stroke="#ffffff" stroke-width="1.75" stroke-linecap="round" stroke-linejoin="round"><path d="M9.7 4H6.9A2.9 2.9 0 0 0 4 6.9V16.35A2.9 2.9 0 0 0 6.9 19.25H16.1A2.9 2.9 0 0 0 19 16.35V13.7"/><path d="M8.77 13.1V10.94L16.66 2.81A2.45 2.45 0 0 1 20.16 6.23L12.23 14.4H10.07A1.3 1.3 0 0 1 8.77 13.1Z"/><path d="M15.47 4.03L18.97 7.45"/></svg><span style="left:42.7px;top:10.9px;font-size:15px;letter-spacing:0.78px;color:#ffffff">Button</span></div>
<div class="btn" style="left:843.5px;top:1663.95px;width:35px;height:35px;border-radius:7.5px;background:#f6ab6c;"><svg style="left:6.1px;top:8px" width="22" height="22" viewBox="0 0 24 24" fill="none" stroke="#ffffff" stroke-width="1.75" stroke-linecap="round" stroke-linejoin="round"><path d="M9.7 4H6.9A2.9 2.9 0 0 0 4 6.9V16.35A2.9 2.9 0 0 0 6.9 19.25H16.1A2.9 2.9 0 0 0 19 16.35V13.7"/><path d="M8.77 13.1V10.94L16.66 2.81A2.45 2.45 0 0 1 20.16 6.23L12.23 14.4H10.07A1.3 1.3 0 0 1 8.77 13.1Z"/><path d="M15.47 4.03L18.97 7.45"/></svg></div>
<div class="btn" style="left:993.6px;top:1663.95px;width:103.3px;height:35.3px;border-radius:7.5px;background:#84cda6;"><svg style="left:11.2px;top:8px" width="22" height="22" viewBox="0 0 24 24" fill="none" stroke="#ffffff" stroke-width="1.75" stroke-linecap="round" stroke-linejoin="round"><path d="M9.7 4H6.9A2.9 2.9 0 0 0 4 6.9V16.35A2.9 2.9 0 0 0 6.9 19.25H16.1A2.9 2.9 0 0 0 19 16.35V13.7"/><path d="M8.77 13.1V10.94L16.66 2.81A2.45 2.45 0 0 1 20.16 6.23L12.23 14.4H10.07A1.3 1.3 0 0 1 8.77 13.1Z"/><path d="M15.47 4.03L18.97 7.45"/></svg><span style="left:42.7px;top:10.9px;font-size:15px;letter-spacing:0.78px;color:#ffffff">Button</span></div>
<div class="btn" style="left:1109.8px;top:1663.95px;width:35px;height:35px;border-radius:7.5px;background:#84cda6;"><svg style="left:6.1px;top:8px" width="22" height="22" viewBox="0 0 24 24" fill="none" stroke="#ffffff" stroke-width="1.75" stroke-linecap="round" stroke-linejoin="round"><path d="M9.7 4H6.9A2.9 2.9 0 0 0 4 6.9V16.35A2.9 2.9 0 0 0 6.9 19.25H16.1A2.9 2.9 0 0 0 19 16.35V13.7"/><path d="M8.77 13.1V10.94L16.66 2.81A2.45 2.45 0 0 1 20.16 6.23L12.23 14.4H10.07A1.3 1.3 0 0 1 8.77 13.1Z"/><path d="M15.47 4.03L18.97 7.45"/></svg></div>
<div class="btn" style="left:1259.9px;top:1663.95px;width:103.3px;height:35.3px;border-radius:7.5px;background:#eecf78;"><svg style="left:11.2px;top:8px" width="22" height="22" viewBox="0 0 24 24" fill="none" stroke="#ffffff" stroke-width="1.75" stroke-linecap="round" stroke-linejoin="round"><path d="M9.7 4H6.9A2.9 2.9 0 0 0 4 6.9V16.35A2.9 2.9 0 0 0 6.9 19.25H16.1A2.9 2.9 0 0 0 19 16.35V13.7"/><path d="M8.77 13.1V10.94L16.66 2.81A2.45 2.45 0 0 1 20.16 6.23L12.23 14.4H10.07A1.3 1.3 0 0 1 8.77 13.1Z"/><path d="M15.47 4.03L18.97 7.45"/></svg><span style="left:42.7px;top:10.9px;font-size:15px;letter-spacing:0.78px;color:#ffffff">Button</span></div>
<div class="btn" style="left:1376.1px;top:1663.95px;width:35px;height:35px;border-radius:7.5px;background:#eecf78;"><svg style="left:6.1px;top:8px" width="22" height="22" viewBox="0 0 24 24" fill="none" stroke="#ffffff" stroke-width="1.75" stroke-linecap="round" stroke-linejoin="round"><path d="M9.7 4H6.9A2.9 2.9 0 0 0 4 6.9V16.35A2.9 2.9 0 0 0 6.9 19.25H16.1A2.9 2.9 0 0 0 19 16.35V13.7"/><path d="M8.77 13.1V10.94L16.66 2.81A2.45 2.45 0 0 1 20.16 6.23L12.23 14.4H10.07A1.3 1.3 0 0 1 8.77 13.1Z"/><path d="M15.47 4.03L18.97 7.45"/></svg></div>
<div class="btn" style="left:1526.2px;top:1663.95px;width:103.3px;height:35.3px;border-radius:7.5px;background:#f0668a;"><svg style="left:11.2px;top:8px" width="22" height="22" viewBox="0 0 24 24" fill="none" stroke="#ffffff" stroke-width="1.75" stroke-linecap="round" stroke-linejoin="round"><path d="M9.7 4H6.9A2.9 2.9 0 0 0 4 6.9V16.35A2.9 2.9 0 0 0 6.9 19.25H16.1A2.9 2.9 0 0 0 19 16.35V13.7"/><path d="M8.77 13.1V10.94L16.66 2.81A2.45 2.45 0 0 1 20.16 6.23L12.23 14.4H10.07A1.3 1.3 0 0 1 8.77 13.1Z"/><path d="M15.47 4.03L18.97 7.45"/></svg><span style="left:42.7px;top:10.9px;font-size:15px;letter-spacing:0.78px;color:#ffffff">Button</span></div>
<div class="btn" style="left:1642.4px;top:1663.95px;width:35px;height:35px;border-radius:7.5px;background:#f0668a;"><svg style="left:6.1px;top:8px" width="22" height="22" viewBox="0 0 24 24" fill="none" stroke="#ffffff" stroke-width="1.75" stroke-linecap="round" stroke-linejoin="round"><path d="M9.7 4H6.9A2.9 2.9 0 0 0 4 6.9V16.35A2.9 2.9 0 0 0 6.9 19.25H16.1A2.9 2.9 0 0 0 19 16.35V13.7"/><path d="M8.77 13.1V10.94L16.66 2.81A2.45 2.45 0 0 1 20.16 6.23L12.23 14.4H10.07A1.3 1.3 0 0 1 8.77 13.1Z"/><path d="M15.47 4.03L18.97 7.45"/></svg></div>
<div class="btn" style="left:1792.5px;top:1663.95px;width:103.3px;height:35.3px;border-radius:7.5px;background:#fff;border:1.5px solid #f0f0f0;"><svg style="left:9.7px;top:6.5px" width="22" height="22" viewBox="0 0 24 24" fill="none" stroke="#7a7a7a" stroke-width="1.75" stroke-linecap="round" stroke-linejoin="round"><path d="M9.7 4H6.9A2.9 2.9 0 0 0 4 6.9V16.35A2.9 2.9 0 0 0 6.9 19.25H16.1A2.9 2.9 0 0 0 19 16.35V13.7"/><path d="M8.77 13.1V10.94L16.66 2.81A2.45 2.45 0 0 1 20.16 6.23L12.23 14.4H10.07A1.3 1.3 0 0 1 8.77 13.1Z"/><path d="M15.47 4.03L18.97 7.45"/></svg><span style="left:41.2px;top:9.4px;font-size:15px;letter-spacing:0.78px;color:#7a7a7a">Button</span></div>
<div class="btn" style="left:1908.7px;top:1663.95px;width:35px;height:35px;border-radius:7.5px;background:#fff;border:1.5px solid #f0f0f0;"><svg style="left:4.6px;top:6.5px" width="22" height="22" viewBox="0 0 24 24" fill="none" stroke="#7a7a7a" stroke-width="1.75" stroke-linecap="round" stroke-linejoin="round"><path d="M9.7 4H6.9A2.9 2.9 0 0 0 4 6.9V16.35A2.9 2.9 0 0 0 6.9 19.25H16.1A2.9 2.9 0 0 0 19 16.35V13.7"/><path d="M8.77 13.1V10.94L16.66 2.81A2.45 2.45 0 0 1 20.16 6.23L12.23 14.4H10.07A1.3 1.3 0 0 1 8.77 13.1Z"/><path d="M15.47 4.03L18.97 7.45"/></svg></div>
<div class="btn" style="left:2058.8px;top:1663.95px;width:103.3px;height:35.3px;border-radius:7.5px;background:#fff;border:1.5px solid #f0f0f0;"><svg style="left:9.7px;top:6.5px" width="22" height="22" viewBox="0 0 24 24" fill="none" stroke="#7a7a7a" stroke-width="1.75" stroke-linecap="round" stroke-linejoin="round"><path d="M9.7 4H6.9A2.9 2.9 0 0 0 4 6.9V16.35A2.9 2.9 0 0 0 6.9 19.25H16.1A2.9 2.9 0 0 0 19 16.35V13.7"/><path d="M8.77 13.1V10.94L16.66 2.81A2.45 2.45 0 0 1 20.16 6.23L12.23 14.4H10.07A1.3 1.3 0 0 1 8.77 13.1Z"/><path d="M15.47 4.03L18.97 7.45"/></svg><span style="left:41.2px;top:9.4px;font-size:15px;letter-spacing:0.78px;color:#7a7a7a">Button</span></div>
<div class="btn" style="left:2175px;top:1663.95px;width:35px;height:35px;border-radius:7.5px;background:#fff;border:1.5px solid #f0f0f0;"><svg style="left:4.6px;top:6.5px" width="22" height="22" viewBox="0 0 24 24" fill="none" stroke="#7a7a7a" stroke-width="1.75" stroke-linecap="round" stroke-linejoin="round"><path d="M9.7 4H6.9A2.9 2.9 0 0 0 4 6.9V16.35A2.9 2.9 0 0 0 6.9 19.25H16.1A2.9 2.9 0 0 0 19 16.35V13.7"/><path d="M8.77 13.1V10.94L16.66 2.81A2.45 2.45 0 0 1 20.16 6.23L12.23 14.4H10.07A1.3 1.3 0 0 1 8.77 13.1Z"/><path d="M15.47 4.03L18.97 7.45"/></svg></div>
<div class="btn" style="left:2325.1px;top:1663.95px;width:103.3px;height:35.3px;border-radius:7.5px;background:#fff;border:1.5px dashed #e0e0e0;border-radius:5px;"><svg style="left:9.7px;top:6.5px" width="22" height="22" viewBox="0 0 24 24" fill="none" stroke="#7a7a7a" stroke-width="1.75" stroke-linecap="round" stroke-linejoin="round"><path d="M9.7 4H6.9A2.9 2.9 0 0 0 4 6.9V16.35A2.9 2.9 0 0 0 6.9 19.25H16.1A2.9 2.9 0 0 0 19 16.35V13.7"/><path d="M8.77 13.1V10.94L16.66 2.81A2.45 2.45 0 0 1 20.16 6.23L12.23 14.4H10.07A1.3 1.3 0 0 1 8.77 13.1Z"/><path d="M15.47 4.03L18.97 7.45"/></svg><span style="left:41.2px;top:9.4px;font-size:15px;letter-spacing:0.78px;color:#7a7a7a">Button</span></div>
<div class="btn" style="left:2441.3px;top:1663.95px;width:35px;height:35px;border-radius:7.5px;background:#fff;border:1.5px dashed #e0e0e0;border-radius:5px;"><svg style="left:4.6px;top:6.5px" width="22" height="22" viewBox="0 0 24 24" fill="none" stroke="#7a7a7a" stroke-width="1.75" stroke-linecap="round" stroke-linejoin="round"><path d="M9.7 4H6.9A2.9 2.9 0 0 0 4 6.9V16.35A2.9 2.9 0 0 0 6.9 19.25H16.1A2.9 2.9 0 0 0 19 16.35V13.7"/><path d="M8.77 13.1V10.94L16.66 2.81A2.45 2.45 0 0 1 20.16 6.23L12.23 14.4H10.07A1.3 1.3 0 0 1 8.77 13.1Z"/><path d="M15.47 4.03L18.97 7.45"/></svg></div>
<div class="btn" style="left:2591.4px;top:1663.95px;width:103.3px;height:35.3px;border-radius:7.5px;background:transparent;"><svg style="left:11.2px;top:8px" width="22" height="22" viewBox="0 0 24 24" fill="none" stroke="#a3a3a6" stroke-width="1.75" stroke-linecap="round" stroke-linejoin="round"><path d="M9.7 4H6.9A2.9 2.9 0 0 0 4 6.9V16.35A2.9 2.9 0 0 0 6.9 19.25H16.1A2.9 2.9 0 0 0 19 16.35V13.7"/><path d="M8.77 13.1V10.94L16.66 2.81A2.45 2.45 0 0 1 20.16 6.23L12.23 14.4H10.07A1.3 1.3 0 0 1 8.77 13.1Z"/><path d="M15.47 4.03L18.97 7.45"/></svg><span style="left:42.7px;top:10.9px;font-size:15px;letter-spacing:0.78px;color:#a3a3a6">Button</span></div>
<div class="btn" style="left:2707.6px;top:1663.95px;width:35px;height:35px;border-radius:7.5px;background:transparent;"><svg style="left:6.1px;top:8px" width="22" height="22" viewBox="0 0 24 24" fill="none" stroke="#a3a3a6" stroke-width="1.75" stroke-linecap="round" stroke-linejoin="round"><path d="M9.7 4H6.9A2.9 2.9 0 0 0 4 6.9V16.35A2.9 2.9 0 0 0 6.9 19.25H16.1A2.9 2.9 0 0 0 19 16.35V13.7"/><path d="M8.77 13.1V10.94L16.66 2.81A2.45 2.45 0 0 1 20.16 6.23L12.23 14.4H10.07A1.3 1.3 0 0 1 8.77 13.1Z"/><path d="M15.47 4.03L18.97 7.45"/></svg></div>
</body></html>
